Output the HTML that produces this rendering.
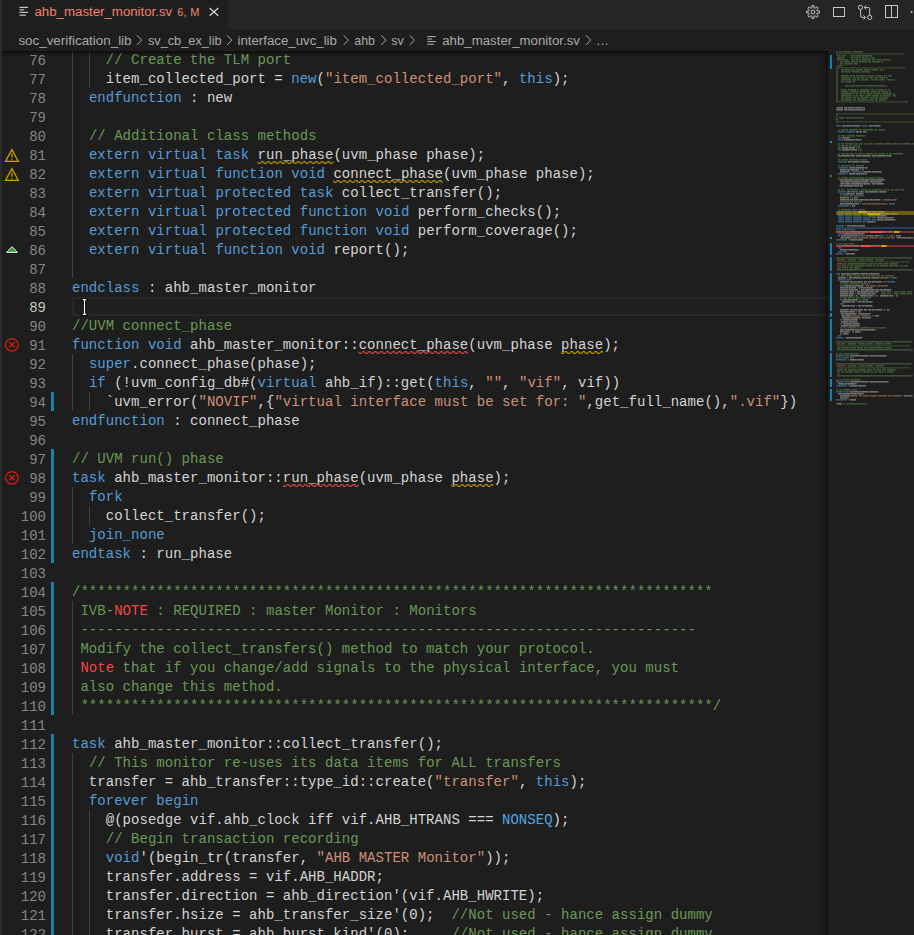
<!DOCTYPE html>
<html><head><meta charset="utf-8">
<style>
*{margin:0;padding:0;box-sizing:border-box}
html,body{width:914px;height:935px;overflow:hidden;background:#1e1e1e}
body{position:relative;font-family:"Liberation Sans",sans-serif}
#tabs{position:absolute;left:0;top:0;width:914px;height:29px;background:#252526}
#tab{position:absolute;left:0;top:0;width:228px;height:29px;background:#1e1e1e}
.tt{position:absolute;white-space:nowrap;font-size:13px;line-height:16px}
#crumbs{position:absolute;left:0;top:29px;width:914px;height:22px;background:#1e1e1e}
.bc{position:absolute;top:4px;white-space:nowrap;font-size:13px;line-height:16px;color:#a9a9a9}
#ed{position:absolute;left:0;top:0;width:914px;height:935px}
.ln{position:absolute;margin-top:1px;left:72px;height:19px;line-height:19px;white-space:pre;font-family:"Liberation Mono",monospace;font-size:14px;color:#d4d4d4;letter-spacing:0.03px}
.num{position:absolute;margin-top:2px;left:0;width:46px;text-align:right;height:19px;line-height:19px;font-family:"Liberation Mono",monospace;font-size:14px;color:#858585}
.num.cur{color:#c6c6c6}
i{font-style:normal}
i.k{color:#569cd6}
i.n{color:#4fa6e8}
i.c{color:#6a9955}
i.s{color:#ce9178}
i.r{color:#f44747}
.gd{position:absolute;width:1px;height:19px;background:#404040}
.gb{position:absolute;left:51px;width:3px;background:#1b81a8}
#leftb{position:absolute;left:0;top:0;width:2px;height:935px;background:#2b2b2b}
#curline{position:absolute;left:72px;top:297px;width:790px;height:19px;border:2px solid #282828}
#shadow{position:absolute;left:0;top:51px;width:828px;height:5px;background:linear-gradient(rgba(0,0,0,0.55),rgba(0,0,0,0))}
#mm{position:absolute;left:828px;top:50px;width:86px;height:885px;background:#1e1e1e}
#mmshadow{position:absolute;left:822px;top:51px;width:6px;height:884px;box-shadow:#000000 -6px 0 6px -6px inset}
</style></head><body>
<div id="ed">
<div id="curline"></div>
<div class="ln" style="top:50px">    <i class="c">// Create the TLM port</i></div>
<div class="num" style="top:50px">76</div>
<div class="gd" style="top:50px;left:72.0px"></div>
<div class="gd" style="top:50px;left:88.9px"></div>
<div class="ln" style="top:69px">    item_collected_port = <i class="k">new</i>(<i class="s">&quot;item_collected_port&quot;</i>, <i class="k">this</i>);</div>
<div class="num" style="top:69px">77</div>
<div class="gd" style="top:69px;left:72.0px"></div>
<div class="gd" style="top:69px;left:88.9px"></div>
<div class="ln" style="top:88px">  <i class="k">endfunction</i> : new</div>
<div class="num" style="top:88px">78</div>
<div class="gd" style="top:88px;left:72.0px"></div>
<div class="ln" style="top:107px"></div>
<div class="num" style="top:107px">79</div>
<div class="gd" style="top:107px;left:72.0px"></div>
<div class="ln" style="top:126px">  <i class="c">// Additional class methods</i></div>
<div class="num" style="top:126px">80</div>
<div class="gd" style="top:126px;left:72.0px"></div>
<div class="ln" style="top:145px">  <i class="k">extern</i> <i class="k">virtual</i> <i class="k">task</i> run_phase(uvm_phase phase);</div>
<div class="num" style="top:145px">81</div>
<div class="gd" style="top:145px;left:72.0px"></div>
<div class="ln" style="top:164px">  <i class="k">extern</i> <i class="k">virtual</i> <i class="k">function</i> <i class="k">void</i> connect_phase(uvm_phase phase);</div>
<div class="num" style="top:164px">82</div>
<div class="gd" style="top:164px;left:72.0px"></div>
<div class="ln" style="top:183px">  <i class="k">extern</i> <i class="k">virtual</i> <i class="k">protected</i> <i class="k">task</i> collect_transfer();</div>
<div class="num" style="top:183px">83</div>
<div class="gd" style="top:183px;left:72.0px"></div>
<div class="ln" style="top:202px">  <i class="k">extern</i> <i class="k">virtual</i> <i class="k">protected</i> <i class="k">function</i> <i class="k">void</i> perform_checks();</div>
<div class="num" style="top:202px">84</div>
<div class="gd" style="top:202px;left:72.0px"></div>
<div class="ln" style="top:221px">  <i class="k">extern</i> <i class="k">virtual</i> <i class="k">protected</i> <i class="k">function</i> <i class="k">void</i> perform_coverage();</div>
<div class="num" style="top:221px">85</div>
<div class="gd" style="top:221px;left:72.0px"></div>
<div class="ln" style="top:240px">  <i class="k">extern</i> <i class="k">virtual</i> <i class="k">function</i> <i class="k">void</i> report();</div>
<div class="num" style="top:240px">86</div>
<div class="gd" style="top:240px;left:72.0px"></div>
<div class="ln" style="top:259px"></div>
<div class="num" style="top:259px">87</div>
<div class="gd" style="top:259px;left:72.0px"></div>
<div class="ln" style="top:278px"><i class="k">endclass</i> : ahb_master_monitor</div>
<div class="num" style="top:278px">88</div>
<div class="ln" style="top:297px"></div>
<div class="num cur" style="top:297px">89</div>
<div class="ln" style="top:316px"><i class="c">//UVM connect_phase</i></div>
<div class="num" style="top:316px">90</div>
<div class="ln" style="top:335px"><i class="k">function</i> <i class="k">void</i> ahb_master_monitor::connect_phase(uvm_phase phase);</div>
<div class="num" style="top:335px">91</div>
<div class="ln" style="top:354px">  <i class="k">super</i>.connect_phase(phase);</div>
<div class="num" style="top:354px">92</div>
<div class="gd" style="top:354px;left:72.0px"></div>
<div class="ln" style="top:373px">  <i class="k">if</i> (!uvm_config_db#(<i class="k">virtual</i> ahb_if)::get(<i class="k">this</i>, <i class="s">&quot;&quot;</i>, <i class="s">&quot;vif&quot;</i>, vif))</div>
<div class="num" style="top:373px">93</div>
<div class="gd" style="top:373px;left:72.0px"></div>
<div class="ln" style="top:392px">    `uvm_error(<i class="s">&quot;NOVIF&quot;</i>,{<i class="s">&quot;virtual interface must be set for: &quot;</i>,get_full_name(),<i class="s">&quot;.vif&quot;</i>})</div>
<div class="num" style="top:392px">94</div>
<div class="gd" style="top:392px;left:72.0px"></div>
<div class="gd" style="top:392px;left:88.9px"></div>
<div class="ln" style="top:411px"><i class="k">endfunction</i> : connect_phase</div>
<div class="num" style="top:411px">95</div>
<div class="ln" style="top:430px"></div>
<div class="num" style="top:430px">96</div>
<div class="ln" style="top:449px"><i class="c">// UVM run() phase</i></div>
<div class="num" style="top:449px">97</div>
<div class="ln" style="top:468px"><i class="k">task</i> ahb_master_monitor::run_phase(uvm_phase phase);</div>
<div class="num" style="top:468px">98</div>
<div class="ln" style="top:487px">  <i class="k">fork</i></div>
<div class="num" style="top:487px">99</div>
<div class="gd" style="top:487px;left:72.0px"></div>
<div class="ln" style="top:506px">    collect_transfer();</div>
<div class="num" style="top:506px">100</div>
<div class="gd" style="top:506px;left:72.0px"></div>
<div class="gd" style="top:506px;left:88.9px"></div>
<div class="ln" style="top:525px">  <i class="k">join_none</i></div>
<div class="num" style="top:525px">101</div>
<div class="gd" style="top:525px;left:72.0px"></div>
<div class="ln" style="top:544px"><i class="k">endtask</i> : run_phase</div>
<div class="num" style="top:544px">102</div>
<div class="ln" style="top:563px"></div>
<div class="num" style="top:563px">103</div>
<div class="ln" style="top:582px"><i class="c">/***************************************************************************</i></div>
<div class="num" style="top:582px">104</div>
<div class="ln" style="top:601px"><i class="c"> IVB-</i><i class="r">NOTE</i><i class="c"> : REQUIRED : master Monitor : Monitors</i></div>
<div class="num" style="top:601px">105</div>
<div class="gd" style="top:601px;left:72.0px"></div>
<div class="ln" style="top:620px"><i class="c"> -------------------------------------------------------------------------</i></div>
<div class="num" style="top:620px">106</div>
<div class="gd" style="top:620px;left:72.0px"></div>
<div class="ln" style="top:639px"><i class="c"> Modify the collect_transfers() method to match your protocol.</i></div>
<div class="num" style="top:639px">107</div>
<div class="gd" style="top:639px;left:72.0px"></div>
<div class="ln" style="top:658px"> <i class="r">Note</i><i class="c"> that if you change/add signals to the physical interface, you must</i></div>
<div class="num" style="top:658px">108</div>
<div class="gd" style="top:658px;left:72.0px"></div>
<div class="ln" style="top:677px"><i class="c"> also change this method.</i></div>
<div class="num" style="top:677px">109</div>
<div class="gd" style="top:677px;left:72.0px"></div>
<div class="ln" style="top:696px"><i class="c"> ***************************************************************************/</i></div>
<div class="num" style="top:696px">110</div>
<div class="gd" style="top:696px;left:72.0px"></div>
<div class="ln" style="top:715px"></div>
<div class="num" style="top:715px">111</div>
<div class="ln" style="top:734px"><i class="k">task</i> ahb_master_monitor::collect_transfer();</div>
<div class="num" style="top:734px">112</div>
<div class="ln" style="top:753px">  <i class="c">// This monitor re-uses its data items for ALL transfers</i></div>
<div class="num" style="top:753px">113</div>
<div class="gd" style="top:753px;left:72.0px"></div>
<div class="ln" style="top:772px">  transfer = ahb_transfer::type_id::create(<i class="s">&quot;transfer&quot;</i>, <i class="k">this</i>);</div>
<div class="num" style="top:772px">114</div>
<div class="gd" style="top:772px;left:72.0px"></div>
<div class="ln" style="top:791px">  <i class="k">forever</i> <i class="k">begin</i></div>
<div class="num" style="top:791px">115</div>
<div class="gd" style="top:791px;left:72.0px"></div>
<div class="ln" style="top:810px">    @(posedge vif.ahb_clock iff vif.AHB_HTRANS === <i class="n">NONSEQ</i>);</div>
<div class="num" style="top:810px">116</div>
<div class="gd" style="top:810px;left:72.0px"></div>
<div class="gd" style="top:810px;left:88.9px"></div>
<div class="ln" style="top:829px">    <i class="c">// Begin transaction recording</i></div>
<div class="num" style="top:829px">117</div>
<div class="gd" style="top:829px;left:72.0px"></div>
<div class="gd" style="top:829px;left:88.9px"></div>
<div class="ln" style="top:848px">    <i class="k">void</i>&#x27;(begin_tr(transfer, <i class="s">&quot;AHB MASTER Monitor&quot;</i>));</div>
<div class="num" style="top:848px">118</div>
<div class="gd" style="top:848px;left:72.0px"></div>
<div class="gd" style="top:848px;left:88.9px"></div>
<div class="ln" style="top:867px">    transfer.address = vif.AHB_HADDR;</div>
<div class="num" style="top:867px">119</div>
<div class="gd" style="top:867px;left:72.0px"></div>
<div class="gd" style="top:867px;left:88.9px"></div>
<div class="ln" style="top:886px">    transfer.direction = ahb_direction&#x27;(vif.AHB_HWRITE);</div>
<div class="num" style="top:886px">120</div>
<div class="gd" style="top:886px;left:72.0px"></div>
<div class="gd" style="top:886px;left:88.9px"></div>
<div class="ln" style="top:905px">    transfer.hsize = ahb_transfer_size&#x27;(0);  <i class="c">//Not used - hance assign dummy</i></div>
<div class="num" style="top:905px">121</div>
<div class="gd" style="top:905px;left:72.0px"></div>
<div class="gd" style="top:905px;left:88.9px"></div>
<div class="ln" style="top:924px">    transfer.burst = ahb_burst_kind&#x27;(0);     <i class="c">//Not used - hance assign dummy</i></div>
<div class="num" style="top:924px">122</div>
<div class="gd" style="top:924px;left:72.0px"></div>
<div class="gd" style="top:924px;left:88.9px"></div>
<div class="gb" style="top:392px;height:19px"></div><div class="gb" style="top:449px;height:114px"></div><div class="gb" style="top:582px;height:133px"></div><div class="gb" style="top:734px;height:209px"></div>
<svg style="position:absolute;left:0;top:0" width="914" height="935">
<defs>
<pattern id="sqw" x="0" y="0" width="6" height="3" patternUnits="userSpaceOnUse"><g fill="#cca700"><polygon points="5.5,0 2.5,3 1.1,3 4.1,0"/><polygon points="4,0 6,2 6,0.6 5.4,0"/><polygon points="0,2 1,3 2.4,3 0,0.6"/></g></pattern>
<pattern id="sqe" x="0" y="0" width="6" height="3" patternUnits="userSpaceOnUse"><g fill="#f14c4c"><polygon points="5.5,0 2.5,3 1.1,3 4.1,0"/><polygon points="4,0 6,2 6,0.6 5.4,0"/><polygon points="0,2 1,3 2.4,3 0,0.6"/></g></pattern>
</defs>
<pattern id="sq0" x="257.5" y="161" width="6" height="3" patternUnits="userSpaceOnUse"><g fill="#cca700"><polygon points="5.5,0 2.5,3 1.1,3 4.1,0"/><polygon points="4,0 6,2 6,0.6 5.4,0"/><polygon points="0,2 1,3 2.4,3 0,0.6"/></g></pattern><rect x="257.5" y="161" width="75.9" height="3" fill="url(#sq0)"/>
<pattern id="sq1" x="333.3" y="180" width="6" height="3" patternUnits="userSpaceOnUse"><g fill="#cca700"><polygon points="5.5,0 2.5,3 1.1,3 4.1,0"/><polygon points="4,0 6,2 6,0.6 5.4,0"/><polygon points="0,2 1,3 2.4,3 0,0.6"/></g></pattern><rect x="333.3" y="180" width="109.6" height="3" fill="url(#sq1)"/>
<pattern id="sq2" x="358.6" y="351" width="6" height="3" patternUnits="userSpaceOnUse"><g fill="#f14c4c"><polygon points="5.5,0 2.5,3 1.1,3 4.1,0"/><polygon points="4,0 6,2 6,0.6 5.4,0"/><polygon points="0,2 1,3 2.4,3 0,0.6"/></g></pattern><rect x="358.6" y="351" width="109.6" height="3" fill="url(#sq2)"/>
<pattern id="sq3" x="560.9" y="351" width="6" height="3" patternUnits="userSpaceOnUse"><g fill="#cca700"><polygon points="5.5,0 2.5,3 1.1,3 4.1,0"/><polygon points="4,0 6,2 6,0.6 5.4,0"/><polygon points="0,2 1,3 2.4,3 0,0.6"/></g></pattern><rect x="560.9" y="351" width="42.1" height="3" fill="url(#sq3)"/>
<pattern id="sq4" x="282.8" y="484" width="6" height="3" patternUnits="userSpaceOnUse"><g fill="#f14c4c"><polygon points="5.5,0 2.5,3 1.1,3 4.1,0"/><polygon points="4,0 6,2 6,0.6 5.4,0"/><polygon points="0,2 1,3 2.4,3 0,0.6"/></g></pattern><rect x="282.8" y="484" width="75.9" height="3" fill="url(#sq4)"/>
<pattern id="sq5" x="451.3" y="484" width="6" height="3" patternUnits="userSpaceOnUse"><g fill="#cca700"><polygon points="5.5,0 2.5,3 1.1,3 4.1,0"/><polygon points="4,0 6,2 6,0.6 5.4,0"/><polygon points="0,2 1,3 2.4,3 0,0.6"/></g></pattern><rect x="451.3" y="484" width="42.1" height="3" fill="url(#sq5)"/>
</svg>
</div>
<svg style="position:absolute;left:0;top:50px" width="30" height="885">
<g fill="none" stroke="#cca700" stroke-width="1.2"><path d="M11.9,99.6 L18.3,111.4 H5.5 Z"/><path d="M11.9,118.6 L18.3,130.4 H5.5 Z"/></g>
<g fill="#cca700"><rect x="11.3" y="103.5" width="1.2" height="4.2"/><rect x="11.3" y="109.1" width="1.2" height="1.1"/><rect x="11.3" y="122.5" width="1.2" height="4.2"/><rect x="11.3" y="128.1" width="1.2" height="1.1"/></g>
<path d="M12,196.4 L17.7,202.4 H6.3 Z" fill="none" stroke="#000" stroke-width="2.6" stroke-linejoin="round"/><path d="M12,196.4 L17.7,202.4 H6.3 Z" fill="#3f9a3f" stroke="#f4f4f4" stroke-width="1" stroke-linejoin="round"/>
<g fill="none" stroke="#ea1a0c" stroke-width="1.25"><circle cx="11.9" cy="294.8" r="6.3"/><path d="M9.3,292.2 l5.2,5.2 M14.5,292.2 l-5.2,5.2"/><circle cx="11.9" cy="427.8" r="6.3"/><path d="M9.3,425.2 l5.2,5.2 M14.5,425.2 l-5.2,5.2"/></g>
</svg>
<svg style="position:absolute;left:0;top:0" width="120" height="330">
<path d="M82.2,299.6 H86.8 M84.5,299.6 V314.4 M82.2,314.4 H86.8" fill="none" stroke="#000" stroke-width="3.2" stroke-linecap="round"/>
<path d="M82.6,299.6 H86.4 M84.5,299.6 V314.4 M82.6,314.4 H86.4" fill="none" stroke="#fff" stroke-width="1.2"/>
</svg>
<div id="shadow"></div>
<div id="mm"></div><svg style="position:absolute;left:0;top:0" width="914" height="935"><rect x="836" y="227" width="78" height="2" fill="#264f78" fill-opacity="0.7"/>
<rect x="830" y="55" width="2" height="14" fill="#1b81a8"/>
<rect x="830" y="141" width="2" height="2" fill="#1b81a8"/>
<rect x="830" y="175" width="2" height="2" fill="#1b81a8"/>
<rect x="830" y="237" width="2" height="2" fill="#1b81a8"/>
<rect x="830" y="243" width="2" height="12" fill="#1b81a8"/>
<rect x="830" y="257" width="2" height="14" fill="#1b81a8"/>
<rect x="830" y="273" width="2" height="38" fill="#1b81a8"/>
<rect x="830" y="313" width="2" height="4" fill="#1b81a8"/>
<rect x="830" y="319" width="2" height="32" fill="#1b81a8"/>
<rect x="830" y="353" width="2" height="24" fill="#1b81a8"/>
<rect x="830" y="379" width="2" height="8" fill="#1b81a8"/>
<rect x="830" y="389" width="2" height="12" fill="#1b81a8"/>
<rect x="836" y="51" width="2" height="1.6" fill="#6a9955" fill-opacity="0.40"/>
<rect x="839" y="51" width="3" height="1.6" fill="#6a9955" fill-opacity="0.44"/>
<rect x="843" y="51" width="8" height="1.6" fill="#6a9955" fill-opacity="0.44"/>
<rect x="851" y="51" width="1" height="1.6" fill="#6a9955" fill-opacity="0.25"/>
<rect x="853" y="51" width="10" height="1.6" fill="#6a9955" fill-opacity="0.44"/>
<rect x="836" y="53" width="2" height="1.6" fill="#6a9955" fill-opacity="0.40"/>
<rect x="838" y="53" width="66" height="1.6" fill="#6a9955" fill-opacity="0.26"/>
<rect x="837" y="55" width="4" height="1.6" fill="#6a9955" fill-opacity="0.44"/>
<rect x="842" y="55" width="4" height="1.6" fill="#6a9955" fill-opacity="0.44"/>
<rect x="849" y="55" width="1" height="1.6" fill="#6a9955" fill-opacity="0.25"/>
<rect x="851" y="55" width="3" height="1.6" fill="#6a9955" fill-opacity="0.44"/>
<rect x="854" y="55" width="1" height="1.6" fill="#6a9955" fill-opacity="0.26"/>
<rect x="855" y="55" width="6" height="1.6" fill="#6a9955" fill-opacity="0.44"/>
<rect x="861" y="55" width="1" height="1.6" fill="#6a9955" fill-opacity="0.26"/>
<rect x="862" y="55" width="7" height="1.6" fill="#6a9955" fill-opacity="0.44"/>
<rect x="869" y="55" width="1" height="1.6" fill="#6a9955" fill-opacity="0.25"/>
<rect x="870" y="55" width="2" height="1.6" fill="#6a9955" fill-opacity="0.44"/>
<rect x="837" y="57" width="7" height="1.6" fill="#6a9955" fill-opacity="0.44"/>
<rect x="849" y="57" width="1" height="1.6" fill="#6a9955" fill-opacity="0.25"/>
<rect x="851" y="57" width="3" height="1.6" fill="#6a9955" fill-opacity="0.44"/>
<rect x="855" y="57" width="3" height="1.6" fill="#6a9955" fill-opacity="0.44"/>
<rect x="859" y="57" width="2" height="1.6" fill="#6a9955" fill-opacity="0.44"/>
<rect x="862" y="57" width="2" height="1.6" fill="#6a9955" fill-opacity="0.44"/>
<rect x="864" y="57" width="1" height="1.6" fill="#6a9955" fill-opacity="0.25"/>
<rect x="865" y="57" width="2" height="1.6" fill="#6a9955" fill-opacity="0.44"/>
<rect x="867" y="57" width="1" height="1.6" fill="#6a9955" fill-opacity="0.25"/>
<rect x="868" y="57" width="2" height="1.6" fill="#6a9955" fill-opacity="0.44"/>
<rect x="871" y="57" width="4" height="1.6" fill="#6a9955" fill-opacity="0.44"/>
<rect x="837" y="59" width="11" height="1.6" fill="#6a9955" fill-opacity="0.44"/>
<rect x="849" y="59" width="1" height="1.6" fill="#6a9955" fill-opacity="0.25"/>
<rect x="851" y="59" width="4" height="1.6" fill="#6a9955" fill-opacity="0.44"/>
<rect x="856" y="59" width="4" height="1.6" fill="#6a9955" fill-opacity="0.44"/>
<rect x="861" y="59" width="10" height="1.6" fill="#6a9955" fill-opacity="0.44"/>
<rect x="872" y="59" width="3" height="1.6" fill="#6a9955" fill-opacity="0.44"/>
<rect x="876" y="59" width="6" height="1.6" fill="#6a9955" fill-opacity="0.44"/>
<rect x="883" y="59" width="7" height="1.6" fill="#6a9955" fill-opacity="0.44"/>
<rect x="890" y="59" width="1" height="1.6" fill="#6a9955" fill-opacity="0.25"/>
<rect x="838" y="61" width="1" height="1.6" fill="#6a9955" fill-opacity="0.25"/>
<rect x="840" y="61" width="3" height="1.6" fill="#6a9955" fill-opacity="0.44"/>
<rect x="844" y="61" width="6" height="1.6" fill="#6a9955" fill-opacity="0.44"/>
<rect x="851" y="61" width="7" height="1.6" fill="#6a9955" fill-opacity="0.44"/>
<rect x="859" y="61" width="8" height="1.6" fill="#6a9955" fill-opacity="0.44"/>
<rect x="868" y="61" width="3" height="1.6" fill="#6a9955" fill-opacity="0.44"/>
<rect x="872" y="61" width="8" height="1.6" fill="#6a9955" fill-opacity="0.44"/>
<rect x="881" y="61" width="2" height="1.6" fill="#6a9955" fill-opacity="0.44"/>
<rect x="838" y="63" width="1" height="1.6" fill="#6a9955" fill-opacity="0.25"/>
<rect x="840" y="63" width="3" height="1.6" fill="#6a9955" fill-opacity="0.44"/>
<rect x="844" y="63" width="9" height="1.6" fill="#6a9955" fill-opacity="0.44"/>
<rect x="854" y="63" width="3" height="1.6" fill="#6a9955" fill-opacity="0.44"/>
<rect x="857" y="63" width="1" height="1.6" fill="#6a9955" fill-opacity="0.25"/>
<rect x="837" y="65" width="5" height="1.6" fill="#6a9955" fill-opacity="0.44"/>
<rect x="843" y="65" width="1" height="1.6" fill="#6a9955" fill-opacity="0.25"/>
<rect x="836" y="67" width="67" height="1.6" fill="#6a9955" fill-opacity="0.26"/>
<rect x="903" y="67" width="2" height="1.6" fill="#6a9955" fill-opacity="0.40"/>
<rect x="836" y="69" width="2" height="1.6" fill="#6a9955" fill-opacity="0.40"/>
<rect x="841" y="69" width="9" height="1.6" fill="#6a9955" fill-opacity="0.44"/>
<rect x="851" y="69" width="4" height="1.6" fill="#6a9955" fill-opacity="0.44"/>
<rect x="856" y="69" width="7" height="1.6" fill="#6a9955" fill-opacity="0.44"/>
<rect x="864" y="69" width="6" height="1.6" fill="#6a9955" fill-opacity="0.44"/>
<rect x="871" y="69" width="7" height="1.6" fill="#6a9955" fill-opacity="0.44"/>
<rect x="878" y="69" width="1" height="1.6" fill="#6a9955" fill-opacity="0.25"/>
<rect x="880" y="69" width="3" height="1.6" fill="#6a9955" fill-opacity="0.44"/>
<rect x="883" y="69" width="1" height="1.6" fill="#6a9955" fill-opacity="0.25"/>
<rect x="836" y="71" width="2" height="1.6" fill="#6a9955" fill-opacity="0.40"/>
<rect x="841" y="71" width="3" height="1.6" fill="#6a9955" fill-opacity="0.44"/>
<rect x="845" y="71" width="6" height="1.6" fill="#6a9955" fill-opacity="0.44"/>
<rect x="852" y="71" width="8" height="1.6" fill="#6a9955" fill-opacity="0.44"/>
<rect x="861" y="71" width="9" height="1.6" fill="#6a9955" fill-opacity="0.44"/>
<rect x="836" y="73" width="2" height="1.6" fill="#6a9955" fill-opacity="0.40"/>
<rect x="836" y="75" width="2" height="1.6" fill="#6a9955" fill-opacity="0.40"/>
<rect x="841" y="75" width="8" height="1.6" fill="#6a9955" fill-opacity="0.44"/>
<rect x="850" y="75" width="5" height="1.6" fill="#6a9955" fill-opacity="0.44"/>
<rect x="856" y="75" width="3" height="1.6" fill="#6a9955" fill-opacity="0.44"/>
<rect x="860" y="75" width="6" height="1.6" fill="#6a9955" fill-opacity="0.44"/>
<rect x="867" y="75" width="7" height="1.6" fill="#6a9955" fill-opacity="0.44"/>
<rect x="874" y="75" width="1" height="1.6" fill="#6a9955" fill-opacity="0.25"/>
<rect x="876" y="75" width="7" height="1.6" fill="#6a9955" fill-opacity="0.44"/>
<rect x="884" y="75" width="1" height="1.6" fill="#6a9955" fill-opacity="0.44"/>
<rect x="885" y="75" width="1" height="1.6" fill="#6a9955" fill-opacity="0.25"/>
<rect x="886" y="75" width="1" height="1.6" fill="#6a9955" fill-opacity="0.44"/>
<rect x="888" y="75" width="1" height="1.6" fill="#6a9955" fill-opacity="0.40"/>
<rect x="889" y="75" width="3" height="1.6" fill="#6a9955" fill-opacity="0.44"/>
<rect x="836" y="77" width="2" height="1.6" fill="#6a9955" fill-opacity="0.40"/>
<rect x="841" y="77" width="1" height="1.6" fill="#6a9955" fill-opacity="0.25"/>
<rect x="842" y="77" width="7" height="1.6" fill="#6a9955" fill-opacity="0.44"/>
<rect x="849" y="77" width="1" height="1.6" fill="#6a9955" fill-opacity="0.25"/>
<rect x="850" y="77" width="1" height="1.6" fill="#6a9955" fill-opacity="0.40"/>
<rect x="851" y="77" width="1" height="1.6" fill="#6a9955" fill-opacity="0.25"/>
<rect x="853" y="77" width="3" height="1.6" fill="#6a9955" fill-opacity="0.44"/>
<rect x="857" y="77" width="3" height="1.6" fill="#6a9955" fill-opacity="0.44"/>
<rect x="861" y="77" width="3" height="1.6" fill="#6a9955" fill-opacity="0.44"/>
<rect x="865" y="77" width="3" height="1.6" fill="#6a9955" fill-opacity="0.44"/>
<rect x="869" y="77" width="4" height="1.6" fill="#6a9955" fill-opacity="0.44"/>
<rect x="874" y="77" width="4" height="1.6" fill="#6a9955" fill-opacity="0.44"/>
<rect x="879" y="77" width="6" height="1.6" fill="#6a9955" fill-opacity="0.44"/>
<rect x="886" y="77" width="2" height="1.6" fill="#6a9955" fill-opacity="0.44"/>
<rect x="836" y="79" width="2" height="1.6" fill="#6a9955" fill-opacity="0.40"/>
<rect x="841" y="79" width="10" height="1.6" fill="#6a9955" fill-opacity="0.44"/>
<rect x="852" y="79" width="4" height="1.6" fill="#6a9955" fill-opacity="0.44"/>
<rect x="857" y="79" width="3" height="1.6" fill="#6a9955" fill-opacity="0.44"/>
<rect x="861" y="79" width="7" height="1.6" fill="#6a9955" fill-opacity="0.44"/>
<rect x="868" y="79" width="1" height="1.6" fill="#6a9955" fill-opacity="0.25"/>
<rect x="871" y="79" width="3" height="1.6" fill="#6a9955" fill-opacity="0.44"/>
<rect x="875" y="79" width="3" height="1.6" fill="#6a9955" fill-opacity="0.44"/>
<rect x="879" y="79" width="6" height="1.6" fill="#6a9955" fill-opacity="0.44"/>
<rect x="886" y="79" width="1" height="1.6" fill="#6a9955" fill-opacity="0.44"/>
<rect x="888" y="79" width="4" height="1.6" fill="#6a9955" fill-opacity="0.44"/>
<rect x="893" y="79" width="2" height="1.6" fill="#6a9955" fill-opacity="0.44"/>
<rect x="836" y="81" width="2" height="1.6" fill="#6a9955" fill-opacity="0.40"/>
<rect x="841" y="81" width="3" height="1.6" fill="#6a9955" fill-opacity="0.44"/>
<rect x="845" y="81" width="7" height="1.6" fill="#6a9955" fill-opacity="0.44"/>
<rect x="853" y="81" width="2" height="1.6" fill="#6a9955" fill-opacity="0.44"/>
<rect x="836" y="83" width="2" height="1.6" fill="#6a9955" fill-opacity="0.40"/>
<rect x="836" y="85" width="2" height="1.6" fill="#6a9955" fill-opacity="0.40"/>
<rect x="845" y="85" width="4" height="1.6" fill="#6a9955" fill-opacity="0.44"/>
<rect x="849" y="85" width="1" height="1.6" fill="#6a9955" fill-opacity="0.25"/>
<rect x="850" y="85" width="2" height="1.6" fill="#6a9955" fill-opacity="0.40"/>
<rect x="852" y="85" width="3" height="1.6" fill="#6a9955" fill-opacity="0.44"/>
<rect x="855" y="85" width="1" height="1.6" fill="#6a9955" fill-opacity="0.25"/>
<rect x="856" y="85" width="6" height="1.6" fill="#6a9955" fill-opacity="0.44"/>
<rect x="862" y="85" width="1" height="1.6" fill="#6a9955" fill-opacity="0.25"/>
<rect x="863" y="85" width="3" height="1.6" fill="#6a9955" fill-opacity="0.44"/>
<rect x="866" y="85" width="1" height="1.6" fill="#6a9955" fill-opacity="0.40"/>
<rect x="867" y="85" width="8" height="1.6" fill="#6a9955" fill-opacity="0.44"/>
<rect x="875" y="85" width="1" height="1.6" fill="#6a9955" fill-opacity="0.40"/>
<rect x="876" y="85" width="7" height="1.6" fill="#6a9955" fill-opacity="0.44"/>
<rect x="883" y="85" width="1" height="1.6" fill="#6a9955" fill-opacity="0.26"/>
<rect x="884" y="85" width="1" height="1.6" fill="#6a9955" fill-opacity="0.44"/>
<rect x="885" y="85" width="1" height="1.6" fill="#6a9955" fill-opacity="0.25"/>
<rect x="886" y="85" width="1" height="1.6" fill="#6a9955" fill-opacity="0.44"/>
<rect x="836" y="87" width="2" height="1.6" fill="#6a9955" fill-opacity="0.40"/>
<rect x="836" y="89" width="2" height="1.6" fill="#6a9955" fill-opacity="0.40"/>
<rect x="841" y="89" width="6" height="1.6" fill="#6a9955" fill-opacity="0.44"/>
<rect x="848" y="89" width="8" height="1.6" fill="#6a9955" fill-opacity="0.44"/>
<rect x="857" y="89" width="2" height="1.6" fill="#6a9955" fill-opacity="0.44"/>
<rect x="860" y="89" width="10" height="1.6" fill="#6a9955" fill-opacity="0.44"/>
<rect x="871" y="89" width="3" height="1.6" fill="#6a9955" fill-opacity="0.44"/>
<rect x="875" y="89" width="2" height="1.6" fill="#6a9955" fill-opacity="0.44"/>
<rect x="878" y="89" width="6" height="1.6" fill="#6a9955" fill-opacity="0.44"/>
<rect x="885" y="89" width="2" height="1.6" fill="#6a9955" fill-opacity="0.44"/>
<rect x="888" y="89" width="2" height="1.6" fill="#6a9955" fill-opacity="0.44"/>
<rect x="836" y="91" width="2" height="1.6" fill="#6a9955" fill-opacity="0.40"/>
<rect x="841" y="91" width="7" height="1.6" fill="#6a9955" fill-opacity="0.44"/>
<rect x="848" y="91" width="1" height="1.6" fill="#6a9955" fill-opacity="0.25"/>
<rect x="850" y="91" width="8" height="1.6" fill="#6a9955" fill-opacity="0.44"/>
<rect x="859" y="91" width="11" height="1.6" fill="#6a9955" fill-opacity="0.44"/>
<rect x="871" y="91" width="5" height="1.6" fill="#6a9955" fill-opacity="0.44"/>
<rect x="877" y="91" width="3" height="1.6" fill="#6a9955" fill-opacity="0.44"/>
<rect x="881" y="91" width="7" height="1.6" fill="#6a9955" fill-opacity="0.44"/>
<rect x="889" y="91" width="2" height="1.6" fill="#6a9955" fill-opacity="0.44"/>
<rect x="836" y="93" width="2" height="1.6" fill="#6a9955" fill-opacity="0.40"/>
<rect x="841" y="93" width="11" height="1.6" fill="#6a9955" fill-opacity="0.44"/>
<rect x="853" y="93" width="2" height="1.6" fill="#6a9955" fill-opacity="0.44"/>
<rect x="856" y="93" width="2" height="1.6" fill="#6a9955" fill-opacity="0.44"/>
<rect x="859" y="93" width="1" height="1.6" fill="#6a9955" fill-opacity="0.25"/>
<rect x="860" y="93" width="2" height="1.6" fill="#6a9955" fill-opacity="0.44"/>
<rect x="863" y="93" width="2" height="1.6" fill="#6a9955" fill-opacity="0.44"/>
<rect x="865" y="93" width="1" height="1.6" fill="#6a9955" fill-opacity="0.25"/>
<rect x="867" y="93" width="5" height="1.6" fill="#6a9955" fill-opacity="0.44"/>
<rect x="872" y="93" width="1" height="1.6" fill="#6a9955" fill-opacity="0.25"/>
<rect x="874" y="93" width="7" height="1.6" fill="#6a9955" fill-opacity="0.44"/>
<rect x="882" y="93" width="10" height="1.6" fill="#6a9955" fill-opacity="0.44"/>
<rect x="893" y="93" width="2" height="1.6" fill="#6a9955" fill-opacity="0.44"/>
<rect x="836" y="95" width="2" height="1.6" fill="#6a9955" fill-opacity="0.40"/>
<rect x="841" y="95" width="10" height="1.6" fill="#6a9955" fill-opacity="0.44"/>
<rect x="852" y="95" width="2" height="1.6" fill="#6a9955" fill-opacity="0.44"/>
<rect x="855" y="95" width="3" height="1.6" fill="#6a9955" fill-opacity="0.44"/>
<rect x="859" y="95" width="4" height="1.6" fill="#6a9955" fill-opacity="0.44"/>
<rect x="863" y="95" width="1" height="1.6" fill="#6a9955" fill-opacity="0.25"/>
<rect x="865" y="95" width="6" height="1.6" fill="#6a9955" fill-opacity="0.44"/>
<rect x="872" y="95" width="7" height="1.6" fill="#6a9955" fill-opacity="0.44"/>
<rect x="880" y="95" width="2" height="1.6" fill="#6a9955" fill-opacity="0.44"/>
<rect x="883" y="95" width="7" height="1.6" fill="#6a9955" fill-opacity="0.44"/>
<rect x="890" y="95" width="1" height="1.6" fill="#6a9955" fill-opacity="0.25"/>
<rect x="893" y="95" width="3" height="1.6" fill="#6a9955" fill-opacity="0.44"/>
<rect x="836" y="97" width="2" height="1.6" fill="#6a9955" fill-opacity="0.40"/>
<rect x="841" y="97" width="3" height="1.6" fill="#6a9955" fill-opacity="0.44"/>
<rect x="845" y="97" width="7" height="1.6" fill="#6a9955" fill-opacity="0.44"/>
<rect x="853" y="97" width="3" height="1.6" fill="#6a9955" fill-opacity="0.44"/>
<rect x="857" y="97" width="3" height="1.6" fill="#6a9955" fill-opacity="0.44"/>
<rect x="861" y="97" width="8" height="1.6" fill="#6a9955" fill-opacity="0.44"/>
<rect x="870" y="97" width="8" height="1.6" fill="#6a9955" fill-opacity="0.44"/>
<rect x="879" y="97" width="9" height="1.6" fill="#6a9955" fill-opacity="0.44"/>
<rect x="836" y="99" width="2" height="1.6" fill="#6a9955" fill-opacity="0.40"/>
<rect x="841" y="99" width="11" height="1.6" fill="#6a9955" fill-opacity="0.44"/>
<rect x="853" y="99" width="3" height="1.6" fill="#6a9955" fill-opacity="0.44"/>
<rect x="857" y="99" width="11" height="1.6" fill="#6a9955" fill-opacity="0.44"/>
<rect x="869" y="99" width="5" height="1.6" fill="#6a9955" fill-opacity="0.44"/>
<rect x="875" y="99" width="3" height="1.6" fill="#6a9955" fill-opacity="0.44"/>
<rect x="879" y="99" width="7" height="1.6" fill="#6a9955" fill-opacity="0.44"/>
<rect x="886" y="99" width="1" height="1.6" fill="#6a9955" fill-opacity="0.25"/>
<rect x="836" y="101" width="2" height="1.6" fill="#6a9955" fill-opacity="0.40"/>
<rect x="838" y="101" width="68" height="1.6" fill="#6a9955" fill-opacity="0.26"/>
<rect x="906" y="101" width="2" height="1.6" fill="#6a9955" fill-opacity="0.40"/>
<rect x="836" y="107" width="1" height="1.6" fill="#d4d4d4" fill-opacity="0.25"/>
<rect x="837" y="107" width="6" height="1.6" fill="#d4d4d4" fill-opacity="0.44"/>
<rect x="844" y="107" width="3" height="1.6" fill="#d4d4d4" fill-opacity="0.44"/>
<rect x="847" y="107" width="1" height="1.6" fill="#d4d4d4" fill-opacity="0.26"/>
<rect x="848" y="107" width="6" height="1.6" fill="#d4d4d4" fill-opacity="0.44"/>
<rect x="854" y="107" width="1" height="1.6" fill="#d4d4d4" fill-opacity="0.26"/>
<rect x="855" y="107" width="7" height="1.6" fill="#d4d4d4" fill-opacity="0.44"/>
<rect x="862" y="107" width="1" height="1.6" fill="#d4d4d4" fill-opacity="0.26"/>
<rect x="863" y="107" width="2" height="1.6" fill="#d4d4d4" fill-opacity="0.44"/>
<rect x="836" y="109" width="1" height="1.6" fill="#d4d4d4" fill-opacity="0.25"/>
<rect x="837" y="109" width="6" height="1.6" fill="#d4d4d4" fill-opacity="0.44"/>
<rect x="844" y="109" width="3" height="1.6" fill="#d4d4d4" fill-opacity="0.44"/>
<rect x="847" y="109" width="1" height="1.6" fill="#d4d4d4" fill-opacity="0.26"/>
<rect x="848" y="109" width="6" height="1.6" fill="#d4d4d4" fill-opacity="0.44"/>
<rect x="854" y="109" width="1" height="1.6" fill="#d4d4d4" fill-opacity="0.26"/>
<rect x="855" y="109" width="7" height="1.6" fill="#d4d4d4" fill-opacity="0.44"/>
<rect x="862" y="109" width="1" height="1.6" fill="#d4d4d4" fill-opacity="0.26"/>
<rect x="863" y="109" width="2" height="1.6" fill="#d4d4d4" fill-opacity="0.44"/>
<rect x="836" y="113" width="2" height="1.6" fill="#6a9955" fill-opacity="0.40"/>
<rect x="838" y="113" width="76" height="1.6" fill="#6a9955" fill-opacity="0.26"/>
<rect x="836" y="115" width="2" height="1.6" fill="#6a9955" fill-opacity="0.40"/>
<rect x="836" y="117" width="2" height="1.6" fill="#6a9955" fill-opacity="0.40"/>
<rect x="839" y="117" width="5" height="1.6" fill="#6a9955" fill-opacity="0.44"/>
<rect x="844" y="117" width="1" height="1.6" fill="#6a9955" fill-opacity="0.25"/>
<rect x="846" y="117" width="3" height="1.6" fill="#6a9955" fill-opacity="0.44"/>
<rect x="849" y="117" width="1" height="1.6" fill="#6a9955" fill-opacity="0.26"/>
<rect x="850" y="117" width="6" height="1.6" fill="#6a9955" fill-opacity="0.44"/>
<rect x="856" y="117" width="1" height="1.6" fill="#6a9955" fill-opacity="0.26"/>
<rect x="857" y="117" width="7" height="1.6" fill="#6a9955" fill-opacity="0.44"/>
<rect x="836" y="119" width="2" height="1.6" fill="#6a9955" fill-opacity="0.40"/>
<rect x="836" y="121" width="2" height="1.6" fill="#6a9955" fill-opacity="0.40"/>
<rect x="838" y="121" width="76" height="1.6" fill="#6a9955" fill-opacity="0.26"/>
<rect x="836" y="125" width="5" height="1.6" fill="#569cd6" fill-opacity="0.44"/>
<rect x="842" y="125" width="3" height="1.6" fill="#d4d4d4" fill-opacity="0.44"/>
<rect x="845" y="125" width="1" height="1.6" fill="#d4d4d4" fill-opacity="0.26"/>
<rect x="846" y="125" width="6" height="1.6" fill="#d4d4d4" fill-opacity="0.44"/>
<rect x="852" y="125" width="1" height="1.6" fill="#d4d4d4" fill-opacity="0.26"/>
<rect x="853" y="125" width="7" height="1.6" fill="#d4d4d4" fill-opacity="0.44"/>
<rect x="861" y="125" width="7" height="1.6" fill="#569cd6" fill-opacity="0.44"/>
<rect x="869" y="125" width="3" height="1.6" fill="#d4d4d4" fill-opacity="0.44"/>
<rect x="872" y="125" width="1" height="1.6" fill="#d4d4d4" fill-opacity="0.26"/>
<rect x="873" y="125" width="7" height="1.6" fill="#d4d4d4" fill-opacity="0.44"/>
<rect x="880" y="125" width="1" height="1.6" fill="#d4d4d4" fill-opacity="0.25"/>
<rect x="838" y="129" width="2" height="1.6" fill="#6a9955" fill-opacity="0.40"/>
<rect x="841" y="129" width="7" height="1.6" fill="#6a9955" fill-opacity="0.44"/>
<rect x="849" y="129" width="9" height="1.6" fill="#6a9955" fill-opacity="0.44"/>
<rect x="859" y="129" width="3" height="1.6" fill="#6a9955" fill-opacity="0.44"/>
<rect x="863" y="129" width="10" height="1.6" fill="#6a9955" fill-opacity="0.44"/>
<rect x="874" y="129" width="3" height="1.6" fill="#6a9955" fill-opacity="0.44"/>
<rect x="878" y="129" width="7" height="1.6" fill="#6a9955" fill-opacity="0.44"/>
<rect x="838" y="131" width="7" height="1.6" fill="#569cd6" fill-opacity="0.44"/>
<rect x="846" y="131" width="9" height="1.6" fill="#569cd6" fill-opacity="0.44"/>
<rect x="856" y="131" width="3" height="1.6" fill="#d4d4d4" fill-opacity="0.44"/>
<rect x="859" y="131" width="1" height="1.6" fill="#d4d4d4" fill-opacity="0.26"/>
<rect x="860" y="131" width="2" height="1.6" fill="#d4d4d4" fill-opacity="0.44"/>
<rect x="863" y="131" width="3" height="1.6" fill="#d4d4d4" fill-opacity="0.44"/>
<rect x="866" y="131" width="1" height="1.6" fill="#d4d4d4" fill-opacity="0.25"/>
<rect x="838" y="135" width="2" height="1.6" fill="#6a9955" fill-opacity="0.40"/>
<rect x="841" y="135" width="5" height="1.6" fill="#6a9955" fill-opacity="0.44"/>
<rect x="847" y="135" width="8" height="1.6" fill="#6a9955" fill-opacity="0.44"/>
<rect x="856" y="135" width="9" height="1.6" fill="#6a9955" fill-opacity="0.44"/>
<rect x="838" y="137" width="3" height="1.6" fill="#569cd6" fill-opacity="0.44"/>
<rect x="842" y="137" width="3" height="1.6" fill="#d4d4d4" fill-opacity="0.44"/>
<rect x="845" y="137" width="1" height="1.6" fill="#d4d4d4" fill-opacity="0.26"/>
<rect x="846" y="137" width="3" height="1.6" fill="#d4d4d4" fill-opacity="0.44"/>
<rect x="849" y="137" width="1" height="1.6" fill="#d4d4d4" fill-opacity="0.25"/>
<rect x="838" y="139" width="5" height="1.6" fill="#569cd6" fill-opacity="0.44"/>
<rect x="844" y="139" width="11" height="1.6" fill="#d4d4d4" fill-opacity="0.44"/>
<rect x="855" y="139" width="1" height="1.6" fill="#d4d4d4" fill-opacity="0.26"/>
<rect x="856" y="139" width="5" height="1.6" fill="#d4d4d4" fill-opacity="0.44"/>
<rect x="861" y="139" width="1" height="1.6" fill="#d4d4d4" fill-opacity="0.25"/>
<rect x="838" y="143" width="2" height="1.6" fill="#6a9955" fill-opacity="0.40"/>
<rect x="841" y="143" width="3" height="1.6" fill="#6a9955" fill-opacity="0.44"/>
<rect x="845" y="143" width="9" height="1.6" fill="#6a9955" fill-opacity="0.44"/>
<rect x="855" y="143" width="3" height="1.6" fill="#6a9955" fill-opacity="0.44"/>
<rect x="859" y="143" width="4" height="1.6" fill="#6a9955" fill-opacity="0.44"/>
<rect x="864" y="143" width="3" height="1.6" fill="#6a9955" fill-opacity="0.44"/>
<rect x="868" y="143" width="4" height="1.6" fill="#6a9955" fill-opacity="0.44"/>
<rect x="873" y="143" width="2" height="1.6" fill="#6a9955" fill-opacity="0.44"/>
<rect x="876" y="143" width="7" height="1.6" fill="#6a9955" fill-opacity="0.44"/>
<rect x="884" y="143" width="7" height="1.6" fill="#6a9955" fill-opacity="0.44"/>
<rect x="892" y="143" width="6" height="1.6" fill="#6a9955" fill-opacity="0.44"/>
<rect x="899" y="143" width="3" height="1.6" fill="#6a9955" fill-opacity="0.44"/>
<rect x="903" y="143" width="8" height="1.6" fill="#6a9955" fill-opacity="0.44"/>
<rect x="912" y="143" width="2" height="1.6" fill="#6a9955" fill-opacity="0.44"/>
<rect x="838" y="145" width="2" height="1.6" fill="#6a9955" fill-opacity="0.40"/>
<rect x="841" y="145" width="4" height="1.6" fill="#6a9955" fill-opacity="0.44"/>
<rect x="846" y="145" width="2" height="1.6" fill="#6a9955" fill-opacity="0.44"/>
<rect x="849" y="145" width="3" height="1.6" fill="#6a9955" fill-opacity="0.44"/>
<rect x="853" y="145" width="7" height="1.6" fill="#6a9955" fill-opacity="0.44"/>
<rect x="838" y="147" width="3" height="1.6" fill="#569cd6" fill-opacity="0.44"/>
<rect x="842" y="147" width="6" height="1.6" fill="#d4d4d4" fill-opacity="0.44"/>
<rect x="848" y="147" width="1" height="1.6" fill="#d4d4d4" fill-opacity="0.26"/>
<rect x="849" y="147" width="6" height="1.6" fill="#d4d4d4" fill-opacity="0.44"/>
<rect x="856" y="147" width="1" height="1.6" fill="#d4d4d4" fill-opacity="0.26"/>
<rect x="858" y="147" width="1" height="1.6" fill="#d4d4d4" fill-opacity="0.44"/>
<rect x="859" y="147" width="1" height="1.6" fill="#d4d4d4" fill-opacity="0.25"/>
<rect x="838" y="149" width="3" height="1.6" fill="#569cd6" fill-opacity="0.44"/>
<rect x="842" y="149" width="8" height="1.6" fill="#d4d4d4" fill-opacity="0.44"/>
<rect x="850" y="149" width="1" height="1.6" fill="#d4d4d4" fill-opacity="0.26"/>
<rect x="851" y="149" width="6" height="1.6" fill="#d4d4d4" fill-opacity="0.44"/>
<rect x="858" y="149" width="1" height="1.6" fill="#d4d4d4" fill-opacity="0.26"/>
<rect x="860" y="149" width="1" height="1.6" fill="#d4d4d4" fill-opacity="0.44"/>
<rect x="861" y="149" width="1" height="1.6" fill="#d4d4d4" fill-opacity="0.25"/>
<rect x="838" y="153" width="2" height="1.6" fill="#6a9955" fill-opacity="0.40"/>
<rect x="841" y="153" width="4" height="1.6" fill="#6a9955" fill-opacity="0.44"/>
<rect x="846" y="153" width="3" height="1.6" fill="#6a9955" fill-opacity="0.44"/>
<rect x="850" y="153" width="4" height="1.6" fill="#6a9955" fill-opacity="0.44"/>
<rect x="855" y="153" width="2" height="1.6" fill="#6a9955" fill-opacity="0.44"/>
<rect x="858" y="153" width="4" height="1.6" fill="#6a9955" fill-opacity="0.44"/>
<rect x="863" y="153" width="2" height="1.6" fill="#6a9955" fill-opacity="0.44"/>
<rect x="866" y="153" width="7" height="1.6" fill="#6a9955" fill-opacity="0.44"/>
<rect x="874" y="153" width="3" height="1.6" fill="#6a9955" fill-opacity="0.44"/>
<rect x="878" y="153" width="7" height="1.6" fill="#6a9955" fill-opacity="0.44"/>
<rect x="886" y="153" width="2" height="1.6" fill="#6a9955" fill-opacity="0.44"/>
<rect x="889" y="153" width="3" height="1.6" fill="#6a9955" fill-opacity="0.44"/>
<rect x="893" y="153" width="10" height="1.6" fill="#6a9955" fill-opacity="0.44"/>
<rect x="838" y="155" width="3" height="1.6" fill="#d4d4d4" fill-opacity="0.44"/>
<rect x="841" y="155" width="1" height="1.6" fill="#d4d4d4" fill-opacity="0.26"/>
<rect x="842" y="155" width="8" height="1.6" fill="#d4d4d4" fill-opacity="0.44"/>
<rect x="850" y="155" width="1" height="1.6" fill="#d4d4d4" fill-opacity="0.26"/>
<rect x="851" y="155" width="4" height="1.6" fill="#d4d4d4" fill-opacity="0.44"/>
<rect x="856" y="155" width="2" height="1.6" fill="#d4d4d4" fill-opacity="0.40"/>
<rect x="858" y="155" width="3" height="1.6" fill="#d4d4d4" fill-opacity="0.44"/>
<rect x="861" y="155" width="1" height="1.6" fill="#d4d4d4" fill-opacity="0.26"/>
<rect x="862" y="155" width="8" height="1.6" fill="#d4d4d4" fill-opacity="0.44"/>
<rect x="870" y="155" width="1" height="1.6" fill="#d4d4d4" fill-opacity="0.40"/>
<rect x="872" y="155" width="4" height="1.6" fill="#d4d4d4" fill-opacity="0.44"/>
<rect x="876" y="155" width="1" height="1.6" fill="#d4d4d4" fill-opacity="0.26"/>
<rect x="877" y="155" width="9" height="1.6" fill="#d4d4d4" fill-opacity="0.44"/>
<rect x="886" y="155" width="1" height="1.6" fill="#d4d4d4" fill-opacity="0.26"/>
<rect x="887" y="155" width="4" height="1.6" fill="#d4d4d4" fill-opacity="0.44"/>
<rect x="891" y="155" width="1" height="1.6" fill="#d4d4d4" fill-opacity="0.25"/>
<rect x="838" y="159" width="2" height="1.6" fill="#6a9955" fill-opacity="0.40"/>
<rect x="841" y="159" width="7" height="1.6" fill="#6a9955" fill-opacity="0.44"/>
<rect x="849" y="159" width="9" height="1.6" fill="#6a9955" fill-opacity="0.44"/>
<rect x="859" y="159" width="8" height="1.6" fill="#6a9955" fill-opacity="0.44"/>
<rect x="838" y="161" width="9" height="1.6" fill="#569cd6" fill-opacity="0.44"/>
<rect x="848" y="161" width="3" height="1.6" fill="#d4d4d4" fill-opacity="0.44"/>
<rect x="851" y="161" width="1" height="1.6" fill="#d4d4d4" fill-opacity="0.26"/>
<rect x="852" y="161" width="8" height="1.6" fill="#d4d4d4" fill-opacity="0.44"/>
<rect x="861" y="161" width="8" height="1.6" fill="#d4d4d4" fill-opacity="0.44"/>
<rect x="869" y="161" width="1" height="1.6" fill="#d4d4d4" fill-opacity="0.25"/>
<rect x="838" y="165" width="2" height="1.6" fill="#6a9955" fill-opacity="0.40"/>
<rect x="841" y="165" width="10" height="1.6" fill="#6a9955" fill-opacity="0.44"/>
<rect x="852" y="165" width="3" height="1.6" fill="#6a9955" fill-opacity="0.44"/>
<rect x="856" y="165" width="8" height="1.6" fill="#6a9955" fill-opacity="0.44"/>
<rect x="838" y="167" width="10" height="1.6" fill="#569cd6" fill-opacity="0.44"/>
<rect x="849" y="167" width="6" height="1.6" fill="#d4d4d4" fill-opacity="0.44"/>
<rect x="855" y="167" width="1" height="1.6" fill="#d4d4d4" fill-opacity="0.26"/>
<rect x="856" y="167" width="8" height="1.6" fill="#d4d4d4" fill-opacity="0.44"/>
<rect x="864" y="167" width="1" height="1.6" fill="#d4d4d4" fill-opacity="0.26"/>
<rect x="865" y="167" width="2" height="1.6" fill="#d4d4d4" fill-opacity="0.44"/>
<rect x="867" y="167" width="1" height="1.6" fill="#d4d4d4" fill-opacity="0.25"/>
<rect x="840" y="169" width="6" height="1.6" fill="#d4d4d4" fill-opacity="0.44"/>
<rect x="846" y="169" width="1" height="1.6" fill="#d4d4d4" fill-opacity="0.25"/>
<rect x="847" y="169" width="3" height="1.6" fill="#d4d4d4" fill-opacity="0.44"/>
<rect x="850" y="169" width="1" height="1.6" fill="#d4d4d4" fill-opacity="0.26"/>
<rect x="851" y="169" width="8" height="1.6" fill="#d4d4d4" fill-opacity="0.44"/>
<rect x="860" y="169" width="1" height="1.6" fill="#d4d4d4" fill-opacity="0.26"/>
<rect x="862" y="169" width="1" height="1.6" fill="#d4d4d4" fill-opacity="0.44"/>
<rect x="863" y="169" width="1" height="1.6" fill="#d4d4d4" fill-opacity="0.25"/>
<rect x="840" y="171" width="9" height="1.6" fill="#d4d4d4" fill-opacity="0.44"/>
<rect x="850" y="171" width="1" height="1.6" fill="#d4d4d4" fill-opacity="0.25"/>
<rect x="852" y="171" width="10" height="1.6" fill="#569cd6" fill-opacity="0.44"/>
<rect x="863" y="171" width="8" height="1.6" fill="#d4d4d4" fill-opacity="0.44"/>
<rect x="871" y="171" width="1" height="1.6" fill="#d4d4d4" fill-opacity="0.25"/>
<rect x="872" y="171" width="9" height="1.6" fill="#d4d4d4" fill-opacity="0.44"/>
<rect x="881" y="171" width="1" height="1.6" fill="#d4d4d4" fill-opacity="0.25"/>
<rect x="838" y="173" width="8" height="1.6" fill="#569cd6" fill-opacity="0.44"/>
<rect x="847" y="173" width="1" height="1.6" fill="#d4d4d4" fill-opacity="0.25"/>
<rect x="849" y="173" width="6" height="1.6" fill="#d4d4d4" fill-opacity="0.44"/>
<rect x="855" y="173" width="1" height="1.6" fill="#d4d4d4" fill-opacity="0.26"/>
<rect x="856" y="173" width="8" height="1.6" fill="#d4d4d4" fill-opacity="0.44"/>
<rect x="864" y="173" width="1" height="1.6" fill="#d4d4d4" fill-opacity="0.26"/>
<rect x="865" y="173" width="2" height="1.6" fill="#d4d4d4" fill-opacity="0.44"/>
<rect x="838" y="177" width="2" height="1.6" fill="#6a9955" fill-opacity="0.40"/>
<rect x="841" y="177" width="7" height="1.6" fill="#6a9955" fill-opacity="0.44"/>
<rect x="849" y="177" width="15" height="1.6" fill="#6a9955" fill-opacity="0.44"/>
<rect x="865" y="177" width="2" height="1.6" fill="#6a9955" fill-opacity="0.44"/>
<rect x="868" y="177" width="7" height="1.6" fill="#6a9955" fill-opacity="0.44"/>
<rect x="876" y="177" width="7" height="1.6" fill="#6a9955" fill-opacity="0.44"/>
<rect x="839" y="179" width="1" height="1.6" fill="#d4d4d4" fill-opacity="0.25"/>
<rect x="840" y="179" width="3" height="1.6" fill="#d4d4d4" fill-opacity="0.44"/>
<rect x="843" y="179" width="1" height="1.6" fill="#d4d4d4" fill-opacity="0.26"/>
<rect x="844" y="179" width="9" height="1.6" fill="#d4d4d4" fill-opacity="0.44"/>
<rect x="853" y="179" width="1" height="1.6" fill="#d4d4d4" fill-opacity="0.26"/>
<rect x="854" y="179" width="5" height="1.6" fill="#d4d4d4" fill-opacity="0.44"/>
<rect x="859" y="179" width="1" height="1.6" fill="#d4d4d4" fill-opacity="0.26"/>
<rect x="860" y="179" width="5" height="1.6" fill="#d4d4d4" fill-opacity="0.44"/>
<rect x="865" y="179" width="1" height="1.6" fill="#d4d4d4" fill-opacity="0.40"/>
<rect x="866" y="179" width="3" height="1.6" fill="#d4d4d4" fill-opacity="0.44"/>
<rect x="869" y="179" width="1" height="1.6" fill="#d4d4d4" fill-opacity="0.26"/>
<rect x="870" y="179" width="6" height="1.6" fill="#d4d4d4" fill-opacity="0.44"/>
<rect x="876" y="179" width="1" height="1.6" fill="#d4d4d4" fill-opacity="0.26"/>
<rect x="877" y="179" width="7" height="1.6" fill="#d4d4d4" fill-opacity="0.44"/>
<rect x="884" y="179" width="1" height="1.6" fill="#d4d4d4" fill-opacity="0.40"/>
<rect x="840" y="181" width="1" height="1.6" fill="#d4d4d4" fill-opacity="0.25"/>
<rect x="841" y="181" width="3" height="1.6" fill="#d4d4d4" fill-opacity="0.44"/>
<rect x="844" y="181" width="1" height="1.6" fill="#d4d4d4" fill-opacity="0.26"/>
<rect x="845" y="181" width="5" height="1.6" fill="#d4d4d4" fill-opacity="0.44"/>
<rect x="850" y="181" width="1" height="1.6" fill="#d4d4d4" fill-opacity="0.26"/>
<rect x="851" y="181" width="3" height="1.6" fill="#d4d4d4" fill-opacity="0.44"/>
<rect x="854" y="181" width="1" height="1.6" fill="#d4d4d4" fill-opacity="0.40"/>
<rect x="855" y="181" width="6" height="1.6" fill="#d4d4d4" fill-opacity="0.44"/>
<rect x="861" y="181" width="1" height="1.6" fill="#d4d4d4" fill-opacity="0.26"/>
<rect x="862" y="181" width="6" height="1.6" fill="#d4d4d4" fill-opacity="0.44"/>
<rect x="868" y="181" width="1" height="1.6" fill="#d4d4d4" fill-opacity="0.25"/>
<rect x="870" y="181" width="3" height="1.6" fill="#d4d4d4" fill-opacity="0.44"/>
<rect x="873" y="181" width="1" height="1.6" fill="#d4d4d4" fill-opacity="0.26"/>
<rect x="874" y="181" width="7" height="1.6" fill="#d4d4d4" fill-opacity="0.44"/>
<rect x="881" y="181" width="1" height="1.6" fill="#d4d4d4" fill-opacity="0.40"/>
<rect x="840" y="183" width="1" height="1.6" fill="#d4d4d4" fill-opacity="0.25"/>
<rect x="841" y="183" width="3" height="1.6" fill="#d4d4d4" fill-opacity="0.44"/>
<rect x="844" y="183" width="1" height="1.6" fill="#d4d4d4" fill-opacity="0.26"/>
<rect x="845" y="183" width="5" height="1.6" fill="#d4d4d4" fill-opacity="0.44"/>
<rect x="850" y="183" width="1" height="1.6" fill="#d4d4d4" fill-opacity="0.26"/>
<rect x="851" y="183" width="3" height="1.6" fill="#d4d4d4" fill-opacity="0.44"/>
<rect x="854" y="183" width="1" height="1.6" fill="#d4d4d4" fill-opacity="0.40"/>
<rect x="855" y="183" width="8" height="1.6" fill="#d4d4d4" fill-opacity="0.44"/>
<rect x="863" y="183" width="1" height="1.6" fill="#d4d4d4" fill-opacity="0.26"/>
<rect x="864" y="183" width="6" height="1.6" fill="#d4d4d4" fill-opacity="0.44"/>
<rect x="870" y="183" width="1" height="1.6" fill="#d4d4d4" fill-opacity="0.25"/>
<rect x="872" y="183" width="3" height="1.6" fill="#d4d4d4" fill-opacity="0.44"/>
<rect x="875" y="183" width="1" height="1.6" fill="#d4d4d4" fill-opacity="0.26"/>
<rect x="876" y="183" width="7" height="1.6" fill="#d4d4d4" fill-opacity="0.44"/>
<rect x="883" y="183" width="1" height="1.6" fill="#d4d4d4" fill-opacity="0.40"/>
<rect x="839" y="185" width="1" height="1.6" fill="#d4d4d4" fill-opacity="0.25"/>
<rect x="840" y="185" width="3" height="1.6" fill="#d4d4d4" fill-opacity="0.44"/>
<rect x="843" y="185" width="1" height="1.6" fill="#d4d4d4" fill-opacity="0.26"/>
<rect x="844" y="185" width="9" height="1.6" fill="#d4d4d4" fill-opacity="0.44"/>
<rect x="853" y="185" width="1" height="1.6" fill="#d4d4d4" fill-opacity="0.26"/>
<rect x="854" y="185" width="5" height="1.6" fill="#d4d4d4" fill-opacity="0.44"/>
<rect x="859" y="185" width="1" height="1.6" fill="#d4d4d4" fill-opacity="0.26"/>
<rect x="860" y="185" width="3" height="1.6" fill="#d4d4d4" fill-opacity="0.44"/>
<rect x="838" y="189" width="2" height="1.6" fill="#6a9955" fill-opacity="0.40"/>
<rect x="841" y="189" width="3" height="1.6" fill="#6a9955" fill-opacity="0.44"/>
<rect x="845" y="189" width="1" height="1.6" fill="#6a9955" fill-opacity="0.26"/>
<rect x="847" y="189" width="11" height="1.6" fill="#6a9955" fill-opacity="0.44"/>
<rect x="859" y="189" width="1" height="1.6" fill="#6a9955" fill-opacity="0.25"/>
<rect x="861" y="189" width="6" height="1.6" fill="#6a9955" fill-opacity="0.44"/>
<rect x="868" y="189" width="3" height="1.6" fill="#6a9955" fill-opacity="0.44"/>
<rect x="872" y="189" width="10" height="1.6" fill="#6a9955" fill-opacity="0.44"/>
<rect x="883" y="189" width="3" height="1.6" fill="#6a9955" fill-opacity="0.44"/>
<rect x="887" y="189" width="3" height="1.6" fill="#6a9955" fill-opacity="0.44"/>
<rect x="891" y="189" width="3" height="1.6" fill="#6a9955" fill-opacity="0.44"/>
<rect x="895" y="189" width="4" height="1.6" fill="#6a9955" fill-opacity="0.44"/>
<rect x="900" y="189" width="4" height="1.6" fill="#6a9955" fill-opacity="0.44"/>
<rect x="838" y="191" width="8" height="1.6" fill="#569cd6" fill-opacity="0.44"/>
<rect x="847" y="191" width="3" height="1.6" fill="#d4d4d4" fill-opacity="0.44"/>
<rect x="851" y="191" width="1" height="1.6" fill="#d4d4d4" fill-opacity="0.40"/>
<rect x="852" y="191" width="6" height="1.6" fill="#569cd6" fill-opacity="0.44"/>
<rect x="859" y="191" width="4" height="1.6" fill="#d4d4d4" fill-opacity="0.44"/>
<rect x="863" y="191" width="1" height="1.6" fill="#d4d4d4" fill-opacity="0.25"/>
<rect x="865" y="191" width="3" height="1.6" fill="#d4d4d4" fill-opacity="0.44"/>
<rect x="868" y="191" width="1" height="1.6" fill="#d4d4d4" fill-opacity="0.26"/>
<rect x="869" y="191" width="9" height="1.6" fill="#d4d4d4" fill-opacity="0.44"/>
<rect x="879" y="191" width="6" height="1.6" fill="#d4d4d4" fill-opacity="0.44"/>
<rect x="885" y="191" width="1" height="1.6" fill="#d4d4d4" fill-opacity="0.40"/>
<rect x="886" y="191" width="1" height="1.6" fill="#d4d4d4" fill-opacity="0.25"/>
<rect x="840" y="193" width="5" height="1.6" fill="#569cd6" fill-opacity="0.44"/>
<rect x="845" y="193" width="1" height="1.6" fill="#d4d4d4" fill-opacity="0.25"/>
<rect x="846" y="193" width="3" height="1.6" fill="#d4d4d4" fill-opacity="0.44"/>
<rect x="849" y="193" width="1" height="1.6" fill="#d4d4d4" fill-opacity="0.40"/>
<rect x="850" y="193" width="4" height="1.6" fill="#d4d4d4" fill-opacity="0.44"/>
<rect x="854" y="193" width="1" height="1.6" fill="#d4d4d4" fill-opacity="0.25"/>
<rect x="856" y="193" width="6" height="1.6" fill="#d4d4d4" fill-opacity="0.44"/>
<rect x="862" y="193" width="1" height="1.6" fill="#d4d4d4" fill-opacity="0.40"/>
<rect x="863" y="193" width="1" height="1.6" fill="#d4d4d4" fill-opacity="0.25"/>
<rect x="840" y="195" width="2" height="1.6" fill="#6a9955" fill-opacity="0.40"/>
<rect x="843" y="195" width="6" height="1.6" fill="#6a9955" fill-opacity="0.44"/>
<rect x="850" y="195" width="3" height="1.6" fill="#6a9955" fill-opacity="0.44"/>
<rect x="854" y="195" width="10" height="1.6" fill="#6a9955" fill-opacity="0.44"/>
<rect x="840" y="197" width="6" height="1.6" fill="#d4d4d4" fill-opacity="0.44"/>
<rect x="846" y="197" width="1" height="1.6" fill="#d4d4d4" fill-opacity="0.26"/>
<rect x="847" y="197" width="2" height="1.6" fill="#d4d4d4" fill-opacity="0.44"/>
<rect x="850" y="197" width="1" height="1.6" fill="#d4d4d4" fill-opacity="0.26"/>
<rect x="852" y="197" width="3" height="1.6" fill="#569cd6" fill-opacity="0.44"/>
<rect x="855" y="197" width="2" height="1.6" fill="#d4d4d4" fill-opacity="0.40"/>
<rect x="857" y="197" width="1" height="1.6" fill="#d4d4d4" fill-opacity="0.25"/>
<rect x="840" y="199" width="6" height="1.6" fill="#d4d4d4" fill-opacity="0.44"/>
<rect x="846" y="199" width="1" height="1.6" fill="#d4d4d4" fill-opacity="0.26"/>
<rect x="847" y="199" width="2" height="1.6" fill="#d4d4d4" fill-opacity="0.44"/>
<rect x="849" y="199" width="1" height="1.6" fill="#d4d4d4" fill-opacity="0.25"/>
<rect x="850" y="199" width="3" height="1.6" fill="#d4d4d4" fill-opacity="0.44"/>
<rect x="853" y="199" width="1" height="1.6" fill="#d4d4d4" fill-opacity="0.26"/>
<rect x="854" y="199" width="4" height="1.6" fill="#d4d4d4" fill-opacity="0.44"/>
<rect x="858" y="199" width="1" height="1.6" fill="#d4d4d4" fill-opacity="0.26"/>
<rect x="859" y="199" width="4" height="1.6" fill="#d4d4d4" fill-opacity="0.44"/>
<rect x="863" y="199" width="2" height="1.6" fill="#d4d4d4" fill-opacity="0.40"/>
<rect x="865" y="199" width="3" height="1.6" fill="#d4d4d4" fill-opacity="0.44"/>
<rect x="868" y="199" width="1" height="1.6" fill="#d4d4d4" fill-opacity="0.26"/>
<rect x="869" y="199" width="4" height="1.6" fill="#d4d4d4" fill-opacity="0.44"/>
<rect x="873" y="199" width="1" height="1.6" fill="#d4d4d4" fill-opacity="0.26"/>
<rect x="874" y="199" width="4" height="1.6" fill="#d4d4d4" fill-opacity="0.44"/>
<rect x="878" y="199" width="2" height="1.6" fill="#d4d4d4" fill-opacity="0.40"/>
<rect x="880" y="199" width="1" height="1.6" fill="#d4d4d4" fill-opacity="0.25"/>
<rect x="882" y="199" width="2" height="1.6" fill="#ce9178" fill-opacity="0.25"/>
<rect x="884" y="199" width="6" height="1.6" fill="#ce9178" fill-opacity="0.44"/>
<rect x="890" y="199" width="1" height="1.6" fill="#ce9178" fill-opacity="0.26"/>
<rect x="891" y="199" width="2" height="1.6" fill="#ce9178" fill-opacity="0.44"/>
<rect x="893" y="199" width="1" height="1.6" fill="#ce9178" fill-opacity="0.25"/>
<rect x="894" y="199" width="2" height="1.6" fill="#d4d4d4" fill-opacity="0.40"/>
<rect x="896" y="199" width="1" height="1.6" fill="#d4d4d4" fill-opacity="0.25"/>
<rect x="840" y="201" width="2" height="1.6" fill="#6a9955" fill-opacity="0.40"/>
<rect x="843" y="201" width="6" height="1.6" fill="#6a9955" fill-opacity="0.44"/>
<rect x="850" y="201" width="3" height="1.6" fill="#6a9955" fill-opacity="0.44"/>
<rect x="854" y="201" width="3" height="1.6" fill="#6a9955" fill-opacity="0.44"/>
<rect x="858" y="201" width="4" height="1.6" fill="#6a9955" fill-opacity="0.44"/>
<rect x="840" y="203" width="4" height="1.6" fill="#d4d4d4" fill-opacity="0.44"/>
<rect x="844" y="203" width="1" height="1.6" fill="#d4d4d4" fill-opacity="0.26"/>
<rect x="845" y="203" width="9" height="1.6" fill="#d4d4d4" fill-opacity="0.44"/>
<rect x="854" y="203" width="1" height="1.6" fill="#d4d4d4" fill-opacity="0.26"/>
<rect x="855" y="203" width="4" height="1.6" fill="#d4d4d4" fill-opacity="0.44"/>
<rect x="860" y="203" width="1" height="1.6" fill="#d4d4d4" fill-opacity="0.26"/>
<rect x="862" y="203" width="3" height="1.6" fill="#569cd6" fill-opacity="0.44"/>
<rect x="865" y="203" width="1" height="1.6" fill="#d4d4d4" fill-opacity="0.40"/>
<rect x="866" y="203" width="1" height="1.6" fill="#ce9178" fill-opacity="0.25"/>
<rect x="867" y="203" width="4" height="1.6" fill="#ce9178" fill-opacity="0.44"/>
<rect x="871" y="203" width="1" height="1.6" fill="#ce9178" fill-opacity="0.26"/>
<rect x="872" y="203" width="9" height="1.6" fill="#ce9178" fill-opacity="0.44"/>
<rect x="881" y="203" width="1" height="1.6" fill="#ce9178" fill-opacity="0.26"/>
<rect x="882" y="203" width="4" height="1.6" fill="#ce9178" fill-opacity="0.44"/>
<rect x="886" y="203" width="1" height="1.6" fill="#ce9178" fill-opacity="0.25"/>
<rect x="887" y="203" width="1" height="1.6" fill="#d4d4d4" fill-opacity="0.25"/>
<rect x="889" y="203" width="4" height="1.6" fill="#569cd6" fill-opacity="0.44"/>
<rect x="893" y="203" width="1" height="1.6" fill="#d4d4d4" fill-opacity="0.40"/>
<rect x="894" y="203" width="1" height="1.6" fill="#d4d4d4" fill-opacity="0.25"/>
<rect x="838" y="205" width="11" height="1.6" fill="#569cd6" fill-opacity="0.44"/>
<rect x="850" y="205" width="1" height="1.6" fill="#d4d4d4" fill-opacity="0.25"/>
<rect x="852" y="205" width="3" height="1.6" fill="#d4d4d4" fill-opacity="0.44"/>
<rect x="838" y="209" width="2" height="1.6" fill="#6a9955" fill-opacity="0.40"/>
<rect x="841" y="209" width="10" height="1.6" fill="#6a9955" fill-opacity="0.44"/>
<rect x="852" y="209" width="5" height="1.6" fill="#6a9955" fill-opacity="0.44"/>
<rect x="858" y="209" width="7" height="1.6" fill="#6a9955" fill-opacity="0.44"/>
<rect x="838" y="211" width="6" height="1.6" fill="#569cd6" fill-opacity="0.44"/>
<rect x="845" y="211" width="7" height="1.6" fill="#569cd6" fill-opacity="0.44"/>
<rect x="853" y="211" width="4" height="1.6" fill="#569cd6" fill-opacity="0.44"/>
<rect x="858" y="211" width="3" height="1.6" fill="#d4d4d4" fill-opacity="0.44"/>
<rect x="861" y="211" width="1" height="1.6" fill="#d4d4d4" fill-opacity="0.26"/>
<rect x="862" y="211" width="5" height="1.6" fill="#d4d4d4" fill-opacity="0.44"/>
<rect x="867" y="211" width="1" height="1.6" fill="#d4d4d4" fill-opacity="0.40"/>
<rect x="868" y="211" width="3" height="1.6" fill="#d4d4d4" fill-opacity="0.44"/>
<rect x="871" y="211" width="1" height="1.6" fill="#d4d4d4" fill-opacity="0.26"/>
<rect x="872" y="211" width="5" height="1.6" fill="#d4d4d4" fill-opacity="0.44"/>
<rect x="878" y="211" width="5" height="1.6" fill="#d4d4d4" fill-opacity="0.44"/>
<rect x="883" y="211" width="1" height="1.6" fill="#d4d4d4" fill-opacity="0.40"/>
<rect x="884" y="211" width="1" height="1.6" fill="#d4d4d4" fill-opacity="0.25"/>
<rect x="838" y="213" width="6" height="1.6" fill="#569cd6" fill-opacity="0.44"/>
<rect x="845" y="213" width="7" height="1.6" fill="#569cd6" fill-opacity="0.44"/>
<rect x="853" y="213" width="8" height="1.6" fill="#569cd6" fill-opacity="0.44"/>
<rect x="862" y="213" width="4" height="1.6" fill="#569cd6" fill-opacity="0.44"/>
<rect x="867" y="213" width="7" height="1.6" fill="#d4d4d4" fill-opacity="0.44"/>
<rect x="874" y="213" width="1" height="1.6" fill="#d4d4d4" fill-opacity="0.26"/>
<rect x="875" y="213" width="5" height="1.6" fill="#d4d4d4" fill-opacity="0.44"/>
<rect x="880" y="213" width="1" height="1.6" fill="#d4d4d4" fill-opacity="0.40"/>
<rect x="881" y="213" width="3" height="1.6" fill="#d4d4d4" fill-opacity="0.44"/>
<rect x="884" y="213" width="1" height="1.6" fill="#d4d4d4" fill-opacity="0.26"/>
<rect x="885" y="213" width="5" height="1.6" fill="#d4d4d4" fill-opacity="0.44"/>
<rect x="891" y="213" width="5" height="1.6" fill="#d4d4d4" fill-opacity="0.44"/>
<rect x="896" y="213" width="1" height="1.6" fill="#d4d4d4" fill-opacity="0.40"/>
<rect x="897" y="213" width="1" height="1.6" fill="#d4d4d4" fill-opacity="0.25"/>
<rect x="838" y="215" width="6" height="1.6" fill="#569cd6" fill-opacity="0.44"/>
<rect x="845" y="215" width="7" height="1.6" fill="#569cd6" fill-opacity="0.44"/>
<rect x="853" y="215" width="9" height="1.6" fill="#569cd6" fill-opacity="0.44"/>
<rect x="863" y="215" width="4" height="1.6" fill="#569cd6" fill-opacity="0.44"/>
<rect x="868" y="215" width="7" height="1.6" fill="#d4d4d4" fill-opacity="0.44"/>
<rect x="875" y="215" width="1" height="1.6" fill="#d4d4d4" fill-opacity="0.26"/>
<rect x="876" y="215" width="8" height="1.6" fill="#d4d4d4" fill-opacity="0.44"/>
<rect x="884" y="215" width="2" height="1.6" fill="#d4d4d4" fill-opacity="0.40"/>
<rect x="886" y="215" width="1" height="1.6" fill="#d4d4d4" fill-opacity="0.25"/>
<rect x="838" y="217" width="6" height="1.6" fill="#569cd6" fill-opacity="0.44"/>
<rect x="845" y="217" width="7" height="1.6" fill="#569cd6" fill-opacity="0.44"/>
<rect x="853" y="217" width="9" height="1.6" fill="#569cd6" fill-opacity="0.44"/>
<rect x="863" y="217" width="8" height="1.6" fill="#569cd6" fill-opacity="0.44"/>
<rect x="872" y="217" width="4" height="1.6" fill="#569cd6" fill-opacity="0.44"/>
<rect x="877" y="217" width="7" height="1.6" fill="#d4d4d4" fill-opacity="0.44"/>
<rect x="884" y="217" width="1" height="1.6" fill="#d4d4d4" fill-opacity="0.26"/>
<rect x="885" y="217" width="6" height="1.6" fill="#d4d4d4" fill-opacity="0.44"/>
<rect x="891" y="217" width="2" height="1.6" fill="#d4d4d4" fill-opacity="0.40"/>
<rect x="893" y="217" width="1" height="1.6" fill="#d4d4d4" fill-opacity="0.25"/>
<rect x="838" y="219" width="6" height="1.6" fill="#569cd6" fill-opacity="0.44"/>
<rect x="845" y="219" width="7" height="1.6" fill="#569cd6" fill-opacity="0.44"/>
<rect x="853" y="219" width="9" height="1.6" fill="#569cd6" fill-opacity="0.44"/>
<rect x="863" y="219" width="8" height="1.6" fill="#569cd6" fill-opacity="0.44"/>
<rect x="872" y="219" width="4" height="1.6" fill="#569cd6" fill-opacity="0.44"/>
<rect x="877" y="219" width="7" height="1.6" fill="#d4d4d4" fill-opacity="0.44"/>
<rect x="884" y="219" width="1" height="1.6" fill="#d4d4d4" fill-opacity="0.26"/>
<rect x="885" y="219" width="8" height="1.6" fill="#d4d4d4" fill-opacity="0.44"/>
<rect x="893" y="219" width="2" height="1.6" fill="#d4d4d4" fill-opacity="0.40"/>
<rect x="895" y="219" width="1" height="1.6" fill="#d4d4d4" fill-opacity="0.25"/>
<rect x="838" y="221" width="6" height="1.6" fill="#569cd6" fill-opacity="0.44"/>
<rect x="845" y="221" width="7" height="1.6" fill="#569cd6" fill-opacity="0.44"/>
<rect x="853" y="221" width="8" height="1.6" fill="#569cd6" fill-opacity="0.44"/>
<rect x="862" y="221" width="4" height="1.6" fill="#569cd6" fill-opacity="0.44"/>
<rect x="867" y="221" width="6" height="1.6" fill="#d4d4d4" fill-opacity="0.44"/>
<rect x="873" y="221" width="2" height="1.6" fill="#d4d4d4" fill-opacity="0.40"/>
<rect x="875" y="221" width="1" height="1.6" fill="#d4d4d4" fill-opacity="0.25"/>
<rect x="836" y="225" width="8" height="1.6" fill="#569cd6" fill-opacity="0.44"/>
<rect x="845" y="225" width="1" height="1.6" fill="#d4d4d4" fill-opacity="0.25"/>
<rect x="847" y="225" width="3" height="1.6" fill="#d4d4d4" fill-opacity="0.44"/>
<rect x="850" y="225" width="1" height="1.6" fill="#d4d4d4" fill-opacity="0.26"/>
<rect x="851" y="225" width="6" height="1.6" fill="#d4d4d4" fill-opacity="0.44"/>
<rect x="857" y="225" width="1" height="1.6" fill="#d4d4d4" fill-opacity="0.26"/>
<rect x="858" y="225" width="7" height="1.6" fill="#d4d4d4" fill-opacity="0.44"/>
<rect x="836" y="229" width="2" height="1.6" fill="#6a9955" fill-opacity="0.40"/>
<rect x="838" y="229" width="3" height="1.6" fill="#6a9955" fill-opacity="0.44"/>
<rect x="842" y="229" width="7" height="1.6" fill="#6a9955" fill-opacity="0.44"/>
<rect x="849" y="229" width="1" height="1.6" fill="#6a9955" fill-opacity="0.26"/>
<rect x="850" y="229" width="5" height="1.6" fill="#6a9955" fill-opacity="0.44"/>
<rect x="836" y="231" width="8" height="1.6" fill="#569cd6" fill-opacity="0.44"/>
<rect x="845" y="231" width="4" height="1.6" fill="#569cd6" fill-opacity="0.44"/>
<rect x="850" y="231" width="3" height="1.6" fill="#d4d4d4" fill-opacity="0.44"/>
<rect x="853" y="231" width="1" height="1.6" fill="#d4d4d4" fill-opacity="0.26"/>
<rect x="854" y="231" width="6" height="1.6" fill="#d4d4d4" fill-opacity="0.44"/>
<rect x="860" y="231" width="1" height="1.6" fill="#d4d4d4" fill-opacity="0.26"/>
<rect x="861" y="231" width="7" height="1.6" fill="#d4d4d4" fill-opacity="0.44"/>
<rect x="868" y="231" width="2" height="1.6" fill="#d4d4d4" fill-opacity="0.25"/>
<rect x="870" y="231" width="7" height="1.6" fill="#d4d4d4" fill-opacity="0.44"/>
<rect x="877" y="231" width="1" height="1.6" fill="#d4d4d4" fill-opacity="0.26"/>
<rect x="878" y="231" width="5" height="1.6" fill="#d4d4d4" fill-opacity="0.44"/>
<rect x="883" y="231" width="1" height="1.6" fill="#d4d4d4" fill-opacity="0.40"/>
<rect x="884" y="231" width="3" height="1.6" fill="#d4d4d4" fill-opacity="0.44"/>
<rect x="887" y="231" width="1" height="1.6" fill="#d4d4d4" fill-opacity="0.26"/>
<rect x="888" y="231" width="5" height="1.6" fill="#d4d4d4" fill-opacity="0.44"/>
<rect x="894" y="231" width="5" height="1.6" fill="#d4d4d4" fill-opacity="0.44"/>
<rect x="899" y="231" width="1" height="1.6" fill="#d4d4d4" fill-opacity="0.40"/>
<rect x="900" y="231" width="1" height="1.6" fill="#d4d4d4" fill-opacity="0.25"/>
<rect x="838" y="233" width="5" height="1.6" fill="#569cd6" fill-opacity="0.44"/>
<rect x="843" y="233" width="1" height="1.6" fill="#d4d4d4" fill-opacity="0.25"/>
<rect x="844" y="233" width="7" height="1.6" fill="#d4d4d4" fill-opacity="0.44"/>
<rect x="851" y="233" width="1" height="1.6" fill="#d4d4d4" fill-opacity="0.26"/>
<rect x="852" y="233" width="5" height="1.6" fill="#d4d4d4" fill-opacity="0.44"/>
<rect x="857" y="233" width="1" height="1.6" fill="#d4d4d4" fill-opacity="0.40"/>
<rect x="858" y="233" width="5" height="1.6" fill="#d4d4d4" fill-opacity="0.44"/>
<rect x="863" y="233" width="1" height="1.6" fill="#d4d4d4" fill-opacity="0.40"/>
<rect x="864" y="233" width="1" height="1.6" fill="#d4d4d4" fill-opacity="0.25"/>
<rect x="838" y="235" width="2" height="1.6" fill="#569cd6" fill-opacity="0.44"/>
<rect x="841" y="235" width="2" height="1.6" fill="#d4d4d4" fill-opacity="0.40"/>
<rect x="843" y="235" width="3" height="1.6" fill="#d4d4d4" fill-opacity="0.44"/>
<rect x="846" y="235" width="1" height="1.6" fill="#d4d4d4" fill-opacity="0.26"/>
<rect x="847" y="235" width="6" height="1.6" fill="#d4d4d4" fill-opacity="0.44"/>
<rect x="853" y="235" width="1" height="1.6" fill="#d4d4d4" fill-opacity="0.26"/>
<rect x="854" y="235" width="2" height="1.6" fill="#d4d4d4" fill-opacity="0.44"/>
<rect x="856" y="235" width="2" height="1.6" fill="#d4d4d4" fill-opacity="0.40"/>
<rect x="858" y="235" width="7" height="1.6" fill="#569cd6" fill-opacity="0.44"/>
<rect x="866" y="235" width="3" height="1.6" fill="#d4d4d4" fill-opacity="0.44"/>
<rect x="869" y="235" width="1" height="1.6" fill="#d4d4d4" fill-opacity="0.26"/>
<rect x="870" y="235" width="2" height="1.6" fill="#d4d4d4" fill-opacity="0.44"/>
<rect x="872" y="235" width="1" height="1.6" fill="#d4d4d4" fill-opacity="0.40"/>
<rect x="873" y="235" width="2" height="1.6" fill="#d4d4d4" fill-opacity="0.25"/>
<rect x="875" y="235" width="3" height="1.6" fill="#d4d4d4" fill-opacity="0.44"/>
<rect x="878" y="235" width="1" height="1.6" fill="#d4d4d4" fill-opacity="0.40"/>
<rect x="879" y="235" width="4" height="1.6" fill="#569cd6" fill-opacity="0.44"/>
<rect x="883" y="235" width="1" height="1.6" fill="#d4d4d4" fill-opacity="0.25"/>
<rect x="885" y="235" width="2" height="1.6" fill="#ce9178" fill-opacity="0.25"/>
<rect x="887" y="235" width="1" height="1.6" fill="#d4d4d4" fill-opacity="0.25"/>
<rect x="889" y="235" width="1" height="1.6" fill="#ce9178" fill-opacity="0.25"/>
<rect x="890" y="235" width="3" height="1.6" fill="#ce9178" fill-opacity="0.44"/>
<rect x="893" y="235" width="1" height="1.6" fill="#ce9178" fill-opacity="0.25"/>
<rect x="894" y="235" width="1" height="1.6" fill="#d4d4d4" fill-opacity="0.25"/>
<rect x="896" y="235" width="3" height="1.6" fill="#d4d4d4" fill-opacity="0.44"/>
<rect x="899" y="235" width="2" height="1.6" fill="#d4d4d4" fill-opacity="0.40"/>
<rect x="840" y="237" width="1" height="1.6" fill="#d4d4d4" fill-opacity="0.25"/>
<rect x="841" y="237" width="3" height="1.6" fill="#d4d4d4" fill-opacity="0.44"/>
<rect x="844" y="237" width="1" height="1.6" fill="#d4d4d4" fill-opacity="0.26"/>
<rect x="845" y="237" width="5" height="1.6" fill="#d4d4d4" fill-opacity="0.44"/>
<rect x="850" y="237" width="1" height="1.6" fill="#d4d4d4" fill-opacity="0.40"/>
<rect x="851" y="237" width="1" height="1.6" fill="#ce9178" fill-opacity="0.25"/>
<rect x="852" y="237" width="5" height="1.6" fill="#ce9178" fill-opacity="0.44"/>
<rect x="857" y="237" width="1" height="1.6" fill="#ce9178" fill-opacity="0.25"/>
<rect x="858" y="237" width="1" height="1.6" fill="#d4d4d4" fill-opacity="0.25"/>
<rect x="859" y="237" width="1" height="1.6" fill="#d4d4d4" fill-opacity="0.40"/>
<rect x="860" y="237" width="1" height="1.6" fill="#ce9178" fill-opacity="0.25"/>
<rect x="861" y="237" width="7" height="1.6" fill="#ce9178" fill-opacity="0.44"/>
<rect x="869" y="237" width="9" height="1.6" fill="#ce9178" fill-opacity="0.44"/>
<rect x="879" y="237" width="4" height="1.6" fill="#ce9178" fill-opacity="0.44"/>
<rect x="884" y="237" width="2" height="1.6" fill="#ce9178" fill-opacity="0.44"/>
<rect x="887" y="237" width="3" height="1.6" fill="#ce9178" fill-opacity="0.44"/>
<rect x="891" y="237" width="3" height="1.6" fill="#ce9178" fill-opacity="0.44"/>
<rect x="894" y="237" width="1" height="1.6" fill="#ce9178" fill-opacity="0.25"/>
<rect x="896" y="237" width="1" height="1.6" fill="#ce9178" fill-opacity="0.25"/>
<rect x="897" y="237" width="1" height="1.6" fill="#d4d4d4" fill-opacity="0.25"/>
<rect x="898" y="237" width="3" height="1.6" fill="#d4d4d4" fill-opacity="0.44"/>
<rect x="901" y="237" width="1" height="1.6" fill="#d4d4d4" fill-opacity="0.26"/>
<rect x="902" y="237" width="4" height="1.6" fill="#d4d4d4" fill-opacity="0.44"/>
<rect x="906" y="237" width="1" height="1.6" fill="#d4d4d4" fill-opacity="0.26"/>
<rect x="907" y="237" width="4" height="1.6" fill="#d4d4d4" fill-opacity="0.44"/>
<rect x="911" y="237" width="2" height="1.6" fill="#d4d4d4" fill-opacity="0.40"/>
<rect x="913" y="237" width="1" height="1.6" fill="#d4d4d4" fill-opacity="0.25"/>
<rect x="836" y="239" width="11" height="1.6" fill="#569cd6" fill-opacity="0.44"/>
<rect x="848" y="239" width="1" height="1.6" fill="#d4d4d4" fill-opacity="0.25"/>
<rect x="850" y="239" width="7" height="1.6" fill="#d4d4d4" fill-opacity="0.44"/>
<rect x="857" y="239" width="1" height="1.6" fill="#d4d4d4" fill-opacity="0.26"/>
<rect x="858" y="239" width="5" height="1.6" fill="#d4d4d4" fill-opacity="0.44"/>
<rect x="836" y="243" width="2" height="1.6" fill="#6a9955" fill-opacity="0.40"/>
<rect x="839" y="243" width="3" height="1.6" fill="#6a9955" fill-opacity="0.44"/>
<rect x="843" y="243" width="3" height="1.6" fill="#6a9955" fill-opacity="0.44"/>
<rect x="846" y="243" width="2" height="1.6" fill="#6a9955" fill-opacity="0.40"/>
<rect x="849" y="243" width="5" height="1.6" fill="#6a9955" fill-opacity="0.44"/>
<rect x="836" y="245" width="4" height="1.6" fill="#569cd6" fill-opacity="0.44"/>
<rect x="841" y="245" width="3" height="1.6" fill="#d4d4d4" fill-opacity="0.44"/>
<rect x="844" y="245" width="1" height="1.6" fill="#d4d4d4" fill-opacity="0.26"/>
<rect x="845" y="245" width="6" height="1.6" fill="#d4d4d4" fill-opacity="0.44"/>
<rect x="851" y="245" width="1" height="1.6" fill="#d4d4d4" fill-opacity="0.26"/>
<rect x="852" y="245" width="7" height="1.6" fill="#d4d4d4" fill-opacity="0.44"/>
<rect x="859" y="245" width="2" height="1.6" fill="#d4d4d4" fill-opacity="0.25"/>
<rect x="861" y="245" width="3" height="1.6" fill="#d4d4d4" fill-opacity="0.44"/>
<rect x="864" y="245" width="1" height="1.6" fill="#d4d4d4" fill-opacity="0.26"/>
<rect x="865" y="245" width="5" height="1.6" fill="#d4d4d4" fill-opacity="0.44"/>
<rect x="870" y="245" width="1" height="1.6" fill="#d4d4d4" fill-opacity="0.40"/>
<rect x="871" y="245" width="3" height="1.6" fill="#d4d4d4" fill-opacity="0.44"/>
<rect x="874" y="245" width="1" height="1.6" fill="#d4d4d4" fill-opacity="0.26"/>
<rect x="875" y="245" width="5" height="1.6" fill="#d4d4d4" fill-opacity="0.44"/>
<rect x="881" y="245" width="5" height="1.6" fill="#d4d4d4" fill-opacity="0.44"/>
<rect x="886" y="245" width="1" height="1.6" fill="#d4d4d4" fill-opacity="0.40"/>
<rect x="887" y="245" width="1" height="1.6" fill="#d4d4d4" fill-opacity="0.25"/>
<rect x="838" y="247" width="4" height="1.6" fill="#569cd6" fill-opacity="0.44"/>
<rect x="840" y="249" width="7" height="1.6" fill="#d4d4d4" fill-opacity="0.44"/>
<rect x="847" y="249" width="1" height="1.6" fill="#d4d4d4" fill-opacity="0.26"/>
<rect x="848" y="249" width="8" height="1.6" fill="#d4d4d4" fill-opacity="0.44"/>
<rect x="856" y="249" width="2" height="1.6" fill="#d4d4d4" fill-opacity="0.40"/>
<rect x="858" y="249" width="1" height="1.6" fill="#d4d4d4" fill-opacity="0.25"/>
<rect x="838" y="251" width="4" height="1.6" fill="#569cd6" fill-opacity="0.44"/>
<rect x="842" y="251" width="1" height="1.6" fill="#569cd6" fill-opacity="0.26"/>
<rect x="843" y="251" width="4" height="1.6" fill="#569cd6" fill-opacity="0.44"/>
<rect x="836" y="253" width="7" height="1.6" fill="#569cd6" fill-opacity="0.44"/>
<rect x="844" y="253" width="1" height="1.6" fill="#d4d4d4" fill-opacity="0.25"/>
<rect x="846" y="253" width="3" height="1.6" fill="#d4d4d4" fill-opacity="0.44"/>
<rect x="849" y="253" width="1" height="1.6" fill="#d4d4d4" fill-opacity="0.26"/>
<rect x="850" y="253" width="5" height="1.6" fill="#d4d4d4" fill-opacity="0.44"/>
<rect x="836" y="257" width="76" height="1.6" fill="#6a9955" fill-opacity="0.40"/>
<rect x="837" y="259" width="3" height="1.6" fill="#6a9955" fill-opacity="0.44"/>
<rect x="840" y="259" width="1" height="1.6" fill="#6a9955" fill-opacity="0.26"/>
<rect x="841" y="259" width="4" height="1.6" fill="#f44747" fill-opacity="0.44"/>
<rect x="846" y="259" width="1" height="1.6" fill="#6a9955" fill-opacity="0.25"/>
<rect x="848" y="259" width="8" height="1.6" fill="#6a9955" fill-opacity="0.44"/>
<rect x="857" y="259" width="1" height="1.6" fill="#6a9955" fill-opacity="0.25"/>
<rect x="859" y="259" width="6" height="1.6" fill="#6a9955" fill-opacity="0.44"/>
<rect x="866" y="259" width="7" height="1.6" fill="#6a9955" fill-opacity="0.44"/>
<rect x="874" y="259" width="1" height="1.6" fill="#6a9955" fill-opacity="0.25"/>
<rect x="876" y="259" width="8" height="1.6" fill="#6a9955" fill-opacity="0.44"/>
<rect x="837" y="261" width="73" height="1.6" fill="#6a9955" fill-opacity="0.26"/>
<rect x="837" y="263" width="6" height="1.6" fill="#6a9955" fill-opacity="0.44"/>
<rect x="844" y="263" width="3" height="1.6" fill="#6a9955" fill-opacity="0.44"/>
<rect x="848" y="263" width="7" height="1.6" fill="#6a9955" fill-opacity="0.44"/>
<rect x="855" y="263" width="1" height="1.6" fill="#6a9955" fill-opacity="0.26"/>
<rect x="856" y="263" width="9" height="1.6" fill="#6a9955" fill-opacity="0.44"/>
<rect x="865" y="263" width="2" height="1.6" fill="#6a9955" fill-opacity="0.40"/>
<rect x="868" y="263" width="6" height="1.6" fill="#6a9955" fill-opacity="0.44"/>
<rect x="875" y="263" width="2" height="1.6" fill="#6a9955" fill-opacity="0.44"/>
<rect x="878" y="263" width="5" height="1.6" fill="#6a9955" fill-opacity="0.44"/>
<rect x="884" y="263" width="4" height="1.6" fill="#6a9955" fill-opacity="0.44"/>
<rect x="889" y="263" width="8" height="1.6" fill="#6a9955" fill-opacity="0.44"/>
<rect x="897" y="263" width="1" height="1.6" fill="#6a9955" fill-opacity="0.25"/>
<rect x="837" y="265" width="4" height="1.6" fill="#f44747" fill-opacity="0.44"/>
<rect x="842" y="265" width="4" height="1.6" fill="#6a9955" fill-opacity="0.44"/>
<rect x="847" y="265" width="2" height="1.6" fill="#6a9955" fill-opacity="0.44"/>
<rect x="850" y="265" width="3" height="1.6" fill="#6a9955" fill-opacity="0.44"/>
<rect x="854" y="265" width="6" height="1.6" fill="#6a9955" fill-opacity="0.44"/>
<rect x="860" y="265" width="1" height="1.6" fill="#6a9955" fill-opacity="0.40"/>
<rect x="861" y="265" width="3" height="1.6" fill="#6a9955" fill-opacity="0.44"/>
<rect x="865" y="265" width="7" height="1.6" fill="#6a9955" fill-opacity="0.44"/>
<rect x="873" y="265" width="2" height="1.6" fill="#6a9955" fill-opacity="0.44"/>
<rect x="876" y="265" width="3" height="1.6" fill="#6a9955" fill-opacity="0.44"/>
<rect x="880" y="265" width="8" height="1.6" fill="#6a9955" fill-opacity="0.44"/>
<rect x="889" y="265" width="9" height="1.6" fill="#6a9955" fill-opacity="0.44"/>
<rect x="898" y="265" width="1" height="1.6" fill="#6a9955" fill-opacity="0.25"/>
<rect x="900" y="265" width="3" height="1.6" fill="#6a9955" fill-opacity="0.44"/>
<rect x="904" y="265" width="4" height="1.6" fill="#6a9955" fill-opacity="0.44"/>
<rect x="837" y="267" width="4" height="1.6" fill="#6a9955" fill-opacity="0.44"/>
<rect x="842" y="267" width="6" height="1.6" fill="#6a9955" fill-opacity="0.44"/>
<rect x="849" y="267" width="4" height="1.6" fill="#6a9955" fill-opacity="0.44"/>
<rect x="854" y="267" width="6" height="1.6" fill="#6a9955" fill-opacity="0.44"/>
<rect x="860" y="267" width="1" height="1.6" fill="#6a9955" fill-opacity="0.25"/>
<rect x="837" y="269" width="76" height="1.6" fill="#6a9955" fill-opacity="0.40"/>
<rect x="836" y="273" width="4" height="1.6" fill="#569cd6" fill-opacity="0.44"/>
<rect x="841" y="273" width="3" height="1.6" fill="#d4d4d4" fill-opacity="0.44"/>
<rect x="844" y="273" width="1" height="1.6" fill="#d4d4d4" fill-opacity="0.26"/>
<rect x="845" y="273" width="6" height="1.6" fill="#d4d4d4" fill-opacity="0.44"/>
<rect x="851" y="273" width="1" height="1.6" fill="#d4d4d4" fill-opacity="0.26"/>
<rect x="852" y="273" width="7" height="1.6" fill="#d4d4d4" fill-opacity="0.44"/>
<rect x="859" y="273" width="2" height="1.6" fill="#d4d4d4" fill-opacity="0.25"/>
<rect x="861" y="273" width="7" height="1.6" fill="#d4d4d4" fill-opacity="0.44"/>
<rect x="868" y="273" width="1" height="1.6" fill="#d4d4d4" fill-opacity="0.26"/>
<rect x="869" y="273" width="8" height="1.6" fill="#d4d4d4" fill-opacity="0.44"/>
<rect x="877" y="273" width="2" height="1.6" fill="#d4d4d4" fill-opacity="0.40"/>
<rect x="879" y="273" width="1" height="1.6" fill="#d4d4d4" fill-opacity="0.25"/>
<rect x="838" y="275" width="2" height="1.6" fill="#6a9955" fill-opacity="0.40"/>
<rect x="841" y="275" width="4" height="1.6" fill="#6a9955" fill-opacity="0.44"/>
<rect x="846" y="275" width="7" height="1.6" fill="#6a9955" fill-opacity="0.44"/>
<rect x="854" y="275" width="2" height="1.6" fill="#6a9955" fill-opacity="0.44"/>
<rect x="856" y="275" width="1" height="1.6" fill="#6a9955" fill-opacity="0.26"/>
<rect x="857" y="275" width="4" height="1.6" fill="#6a9955" fill-opacity="0.44"/>
<rect x="862" y="275" width="3" height="1.6" fill="#6a9955" fill-opacity="0.44"/>
<rect x="866" y="275" width="4" height="1.6" fill="#6a9955" fill-opacity="0.44"/>
<rect x="871" y="275" width="5" height="1.6" fill="#6a9955" fill-opacity="0.44"/>
<rect x="877" y="275" width="3" height="1.6" fill="#6a9955" fill-opacity="0.44"/>
<rect x="881" y="275" width="3" height="1.6" fill="#6a9955" fill-opacity="0.44"/>
<rect x="885" y="275" width="9" height="1.6" fill="#6a9955" fill-opacity="0.44"/>
<rect x="838" y="277" width="8" height="1.6" fill="#d4d4d4" fill-opacity="0.44"/>
<rect x="847" y="277" width="1" height="1.6" fill="#d4d4d4" fill-opacity="0.26"/>
<rect x="849" y="277" width="3" height="1.6" fill="#d4d4d4" fill-opacity="0.44"/>
<rect x="852" y="277" width="1" height="1.6" fill="#d4d4d4" fill-opacity="0.26"/>
<rect x="853" y="277" width="8" height="1.6" fill="#d4d4d4" fill-opacity="0.44"/>
<rect x="861" y="277" width="2" height="1.6" fill="#d4d4d4" fill-opacity="0.25"/>
<rect x="863" y="277" width="4" height="1.6" fill="#d4d4d4" fill-opacity="0.44"/>
<rect x="867" y="277" width="1" height="1.6" fill="#d4d4d4" fill-opacity="0.26"/>
<rect x="868" y="277" width="2" height="1.6" fill="#d4d4d4" fill-opacity="0.44"/>
<rect x="870" y="277" width="2" height="1.6" fill="#d4d4d4" fill-opacity="0.25"/>
<rect x="872" y="277" width="6" height="1.6" fill="#d4d4d4" fill-opacity="0.44"/>
<rect x="878" y="277" width="1" height="1.6" fill="#d4d4d4" fill-opacity="0.40"/>
<rect x="879" y="277" width="1" height="1.6" fill="#ce9178" fill-opacity="0.25"/>
<rect x="880" y="277" width="8" height="1.6" fill="#ce9178" fill-opacity="0.44"/>
<rect x="888" y="277" width="1" height="1.6" fill="#ce9178" fill-opacity="0.25"/>
<rect x="889" y="277" width="1" height="1.6" fill="#d4d4d4" fill-opacity="0.25"/>
<rect x="891" y="277" width="4" height="1.6" fill="#569cd6" fill-opacity="0.44"/>
<rect x="895" y="277" width="1" height="1.6" fill="#d4d4d4" fill-opacity="0.40"/>
<rect x="896" y="277" width="1" height="1.6" fill="#d4d4d4" fill-opacity="0.25"/>
<rect x="838" y="279" width="7" height="1.6" fill="#569cd6" fill-opacity="0.44"/>
<rect x="846" y="279" width="5" height="1.6" fill="#569cd6" fill-opacity="0.44"/>
<rect x="840" y="281" width="2" height="1.6" fill="#d4d4d4" fill-opacity="0.40"/>
<rect x="842" y="281" width="7" height="1.6" fill="#d4d4d4" fill-opacity="0.44"/>
<rect x="850" y="281" width="3" height="1.6" fill="#d4d4d4" fill-opacity="0.44"/>
<rect x="853" y="281" width="1" height="1.6" fill="#d4d4d4" fill-opacity="0.25"/>
<rect x="854" y="281" width="3" height="1.6" fill="#d4d4d4" fill-opacity="0.44"/>
<rect x="857" y="281" width="1" height="1.6" fill="#d4d4d4" fill-opacity="0.26"/>
<rect x="858" y="281" width="5" height="1.6" fill="#d4d4d4" fill-opacity="0.44"/>
<rect x="864" y="281" width="3" height="1.6" fill="#d4d4d4" fill-opacity="0.44"/>
<rect x="868" y="281" width="3" height="1.6" fill="#d4d4d4" fill-opacity="0.44"/>
<rect x="871" y="281" width="1" height="1.6" fill="#d4d4d4" fill-opacity="0.25"/>
<rect x="872" y="281" width="3" height="1.6" fill="#d4d4d4" fill-opacity="0.44"/>
<rect x="875" y="281" width="1" height="1.6" fill="#d4d4d4" fill-opacity="0.26"/>
<rect x="876" y="281" width="6" height="1.6" fill="#d4d4d4" fill-opacity="0.44"/>
<rect x="883" y="281" width="3" height="1.6" fill="#d4d4d4" fill-opacity="0.26"/>
<rect x="887" y="281" width="6" height="1.6" fill="#4fa6e8" fill-opacity="0.44"/>
<rect x="893" y="281" width="1" height="1.6" fill="#d4d4d4" fill-opacity="0.40"/>
<rect x="894" y="281" width="1" height="1.6" fill="#d4d4d4" fill-opacity="0.25"/>
<rect x="840" y="283" width="2" height="1.6" fill="#6a9955" fill-opacity="0.40"/>
<rect x="843" y="283" width="5" height="1.6" fill="#6a9955" fill-opacity="0.44"/>
<rect x="849" y="283" width="11" height="1.6" fill="#6a9955" fill-opacity="0.44"/>
<rect x="861" y="283" width="9" height="1.6" fill="#6a9955" fill-opacity="0.44"/>
<rect x="840" y="285" width="4" height="1.6" fill="#569cd6" fill-opacity="0.44"/>
<rect x="844" y="285" width="1" height="1.6" fill="#d4d4d4" fill-opacity="0.25"/>
<rect x="845" y="285" width="1" height="1.6" fill="#d4d4d4" fill-opacity="0.40"/>
<rect x="846" y="285" width="5" height="1.6" fill="#d4d4d4" fill-opacity="0.44"/>
<rect x="851" y="285" width="1" height="1.6" fill="#d4d4d4" fill-opacity="0.26"/>
<rect x="852" y="285" width="2" height="1.6" fill="#d4d4d4" fill-opacity="0.44"/>
<rect x="854" y="285" width="1" height="1.6" fill="#d4d4d4" fill-opacity="0.40"/>
<rect x="855" y="285" width="8" height="1.6" fill="#d4d4d4" fill-opacity="0.44"/>
<rect x="863" y="285" width="1" height="1.6" fill="#d4d4d4" fill-opacity="0.25"/>
<rect x="865" y="285" width="1" height="1.6" fill="#ce9178" fill-opacity="0.25"/>
<rect x="866" y="285" width="3" height="1.6" fill="#ce9178" fill-opacity="0.44"/>
<rect x="870" y="285" width="6" height="1.6" fill="#ce9178" fill-opacity="0.44"/>
<rect x="877" y="285" width="7" height="1.6" fill="#ce9178" fill-opacity="0.44"/>
<rect x="884" y="285" width="1" height="1.6" fill="#ce9178" fill-opacity="0.25"/>
<rect x="885" y="285" width="2" height="1.6" fill="#d4d4d4" fill-opacity="0.40"/>
<rect x="887" y="285" width="1" height="1.6" fill="#d4d4d4" fill-opacity="0.25"/>
<rect x="840" y="287" width="8" height="1.6" fill="#d4d4d4" fill-opacity="0.44"/>
<rect x="848" y="287" width="1" height="1.6" fill="#d4d4d4" fill-opacity="0.25"/>
<rect x="849" y="287" width="7" height="1.6" fill="#d4d4d4" fill-opacity="0.44"/>
<rect x="857" y="287" width="1" height="1.6" fill="#d4d4d4" fill-opacity="0.26"/>
<rect x="859" y="287" width="3" height="1.6" fill="#d4d4d4" fill-opacity="0.44"/>
<rect x="862" y="287" width="1" height="1.6" fill="#d4d4d4" fill-opacity="0.25"/>
<rect x="863" y="287" width="3" height="1.6" fill="#d4d4d4" fill-opacity="0.44"/>
<rect x="866" y="287" width="1" height="1.6" fill="#d4d4d4" fill-opacity="0.26"/>
<rect x="867" y="287" width="5" height="1.6" fill="#d4d4d4" fill-opacity="0.44"/>
<rect x="872" y="287" width="1" height="1.6" fill="#d4d4d4" fill-opacity="0.25"/>
<rect x="840" y="289" width="8" height="1.6" fill="#d4d4d4" fill-opacity="0.44"/>
<rect x="848" y="289" width="1" height="1.6" fill="#d4d4d4" fill-opacity="0.25"/>
<rect x="849" y="289" width="9" height="1.6" fill="#d4d4d4" fill-opacity="0.44"/>
<rect x="859" y="289" width="1" height="1.6" fill="#d4d4d4" fill-opacity="0.26"/>
<rect x="861" y="289" width="3" height="1.6" fill="#d4d4d4" fill-opacity="0.44"/>
<rect x="864" y="289" width="1" height="1.6" fill="#d4d4d4" fill-opacity="0.26"/>
<rect x="865" y="289" width="9" height="1.6" fill="#d4d4d4" fill-opacity="0.44"/>
<rect x="874" y="289" width="1" height="1.6" fill="#d4d4d4" fill-opacity="0.25"/>
<rect x="875" y="289" width="1" height="1.6" fill="#d4d4d4" fill-opacity="0.40"/>
<rect x="876" y="289" width="3" height="1.6" fill="#d4d4d4" fill-opacity="0.44"/>
<rect x="879" y="289" width="1" height="1.6" fill="#d4d4d4" fill-opacity="0.25"/>
<rect x="880" y="289" width="3" height="1.6" fill="#d4d4d4" fill-opacity="0.44"/>
<rect x="883" y="289" width="1" height="1.6" fill="#d4d4d4" fill-opacity="0.26"/>
<rect x="884" y="289" width="6" height="1.6" fill="#d4d4d4" fill-opacity="0.44"/>
<rect x="890" y="289" width="1" height="1.6" fill="#d4d4d4" fill-opacity="0.40"/>
<rect x="891" y="289" width="1" height="1.6" fill="#d4d4d4" fill-opacity="0.25"/>
<rect x="840" y="291" width="8" height="1.6" fill="#d4d4d4" fill-opacity="0.44"/>
<rect x="848" y="291" width="1" height="1.6" fill="#d4d4d4" fill-opacity="0.25"/>
<rect x="849" y="291" width="5" height="1.6" fill="#d4d4d4" fill-opacity="0.44"/>
<rect x="855" y="291" width="1" height="1.6" fill="#d4d4d4" fill-opacity="0.26"/>
<rect x="857" y="291" width="3" height="1.6" fill="#d4d4d4" fill-opacity="0.44"/>
<rect x="860" y="291" width="1" height="1.6" fill="#d4d4d4" fill-opacity="0.26"/>
<rect x="861" y="291" width="8" height="1.6" fill="#d4d4d4" fill-opacity="0.44"/>
<rect x="869" y="291" width="1" height="1.6" fill="#d4d4d4" fill-opacity="0.26"/>
<rect x="870" y="291" width="4" height="1.6" fill="#d4d4d4" fill-opacity="0.44"/>
<rect x="874" y="291" width="1" height="1.6" fill="#d4d4d4" fill-opacity="0.25"/>
<rect x="875" y="291" width="1" height="1.6" fill="#d4d4d4" fill-opacity="0.40"/>
<rect x="876" y="291" width="1" height="1.6" fill="#d4d4d4" fill-opacity="0.44"/>
<rect x="877" y="291" width="1" height="1.6" fill="#d4d4d4" fill-opacity="0.40"/>
<rect x="878" y="291" width="1" height="1.6" fill="#d4d4d4" fill-opacity="0.25"/>
<rect x="881" y="291" width="2" height="1.6" fill="#6a9955" fill-opacity="0.40"/>
<rect x="883" y="291" width="3" height="1.6" fill="#6a9955" fill-opacity="0.44"/>
<rect x="887" y="291" width="4" height="1.6" fill="#6a9955" fill-opacity="0.44"/>
<rect x="892" y="291" width="1" height="1.6" fill="#6a9955" fill-opacity="0.26"/>
<rect x="894" y="291" width="5" height="1.6" fill="#6a9955" fill-opacity="0.44"/>
<rect x="900" y="291" width="6" height="1.6" fill="#6a9955" fill-opacity="0.44"/>
<rect x="907" y="291" width="5" height="1.6" fill="#6a9955" fill-opacity="0.44"/>
<rect x="840" y="293" width="8" height="1.6" fill="#d4d4d4" fill-opacity="0.44"/>
<rect x="848" y="293" width="1" height="1.6" fill="#d4d4d4" fill-opacity="0.25"/>
<rect x="849" y="293" width="5" height="1.6" fill="#d4d4d4" fill-opacity="0.44"/>
<rect x="855" y="293" width="1" height="1.6" fill="#d4d4d4" fill-opacity="0.26"/>
<rect x="857" y="293" width="3" height="1.6" fill="#d4d4d4" fill-opacity="0.44"/>
<rect x="860" y="293" width="1" height="1.6" fill="#d4d4d4" fill-opacity="0.26"/>
<rect x="861" y="293" width="5" height="1.6" fill="#d4d4d4" fill-opacity="0.44"/>
<rect x="866" y="293" width="1" height="1.6" fill="#d4d4d4" fill-opacity="0.26"/>
<rect x="867" y="293" width="4" height="1.6" fill="#d4d4d4" fill-opacity="0.44"/>
<rect x="871" y="293" width="1" height="1.6" fill="#d4d4d4" fill-opacity="0.25"/>
<rect x="872" y="293" width="1" height="1.6" fill="#d4d4d4" fill-opacity="0.40"/>
<rect x="873" y="293" width="1" height="1.6" fill="#d4d4d4" fill-opacity="0.44"/>
<rect x="874" y="293" width="1" height="1.6" fill="#d4d4d4" fill-opacity="0.40"/>
<rect x="875" y="293" width="1" height="1.6" fill="#d4d4d4" fill-opacity="0.25"/>
<rect x="881" y="293" width="2" height="1.6" fill="#6a9955" fill-opacity="0.40"/>
<rect x="883" y="293" width="3" height="1.6" fill="#6a9955" fill-opacity="0.44"/>
<rect x="887" y="293" width="4" height="1.6" fill="#6a9955" fill-opacity="0.44"/>
<rect x="892" y="293" width="1" height="1.6" fill="#6a9955" fill-opacity="0.26"/>
<rect x="894" y="293" width="5" height="1.6" fill="#6a9955" fill-opacity="0.44"/>
<rect x="900" y="293" width="6" height="1.6" fill="#6a9955" fill-opacity="0.44"/>
<rect x="907" y="293" width="5" height="1.6" fill="#6a9955" fill-opacity="0.44"/>
<rect x="840" y="295" width="8" height="1.6" fill="#d4d4d4" fill-opacity="0.44"/>
<rect x="848" y="295" width="1" height="1.6" fill="#d4d4d4" fill-opacity="0.25"/>
<rect x="849" y="295" width="4" height="1.6" fill="#d4d4d4" fill-opacity="0.44"/>
<rect x="854" y="295" width="1" height="1.6" fill="#d4d4d4" fill-opacity="0.26"/>
<rect x="856" y="295" width="1" height="1.6" fill="#d4d4d4" fill-opacity="0.44"/>
<rect x="857" y="295" width="1" height="1.6" fill="#d4d4d4" fill-opacity="0.25"/>
<rect x="860" y="295" width="8" height="1.6" fill="#d4d4d4" fill-opacity="0.44"/>
<rect x="868" y="295" width="1" height="1.6" fill="#d4d4d4" fill-opacity="0.25"/>
<rect x="869" y="295" width="4" height="1.6" fill="#d4d4d4" fill-opacity="0.44"/>
<rect x="874" y="295" width="1" height="1.6" fill="#d4d4d4" fill-opacity="0.26"/>
<rect x="876" y="295" width="1" height="1.6" fill="#d4d4d4" fill-opacity="0.44"/>
<rect x="877" y="295" width="1" height="1.6" fill="#d4d4d4" fill-opacity="0.25"/>
<rect x="880" y="295" width="8" height="1.6" fill="#d4d4d4" fill-opacity="0.44"/>
<rect x="888" y="295" width="1" height="1.6" fill="#d4d4d4" fill-opacity="0.25"/>
<rect x="889" y="295" width="4" height="1.6" fill="#d4d4d4" fill-opacity="0.44"/>
<rect x="894" y="295" width="1" height="1.6" fill="#d4d4d4" fill-opacity="0.26"/>
<rect x="896" y="295" width="1" height="1.6" fill="#d4d4d4" fill-opacity="0.44"/>
<rect x="897" y="295" width="1" height="1.6" fill="#d4d4d4" fill-opacity="0.25"/>
<rect x="840" y="297" width="2" height="1.6" fill="#6a9955" fill-opacity="0.40"/>
<rect x="843" y="297" width="4" height="1.6" fill="#6a9955" fill-opacity="0.44"/>
<rect x="848" y="297" width="3" height="1.6" fill="#6a9955" fill-opacity="0.44"/>
<rect x="852" y="297" width="3" height="1.6" fill="#6a9955" fill-opacity="0.44"/>
<rect x="856" y="297" width="4" height="1.6" fill="#6a9955" fill-opacity="0.44"/>
<rect x="861" y="297" width="5" height="1.6" fill="#6a9955" fill-opacity="0.44"/>
<rect x="867" y="297" width="4" height="1.6" fill="#6a9955" fill-opacity="0.44"/>
<rect x="840" y="299" width="2" height="1.6" fill="#569cd6" fill-opacity="0.44"/>
<rect x="843" y="299" width="1" height="1.6" fill="#d4d4d4" fill-opacity="0.40"/>
<rect x="844" y="299" width="3" height="1.6" fill="#d4d4d4" fill-opacity="0.44"/>
<rect x="847" y="299" width="1" height="1.6" fill="#d4d4d4" fill-opacity="0.25"/>
<rect x="848" y="299" width="3" height="1.6" fill="#d4d4d4" fill-opacity="0.44"/>
<rect x="851" y="299" width="1" height="1.6" fill="#d4d4d4" fill-opacity="0.26"/>
<rect x="852" y="299" width="6" height="1.6" fill="#d4d4d4" fill-opacity="0.44"/>
<rect x="859" y="299" width="2" height="1.6" fill="#d4d4d4" fill-opacity="0.26"/>
<rect x="862" y="299" width="5" height="1.6" fill="#569cd6" fill-opacity="0.44"/>
<rect x="867" y="299" width="1" height="1.6" fill="#d4d4d4" fill-opacity="0.40"/>
<rect x="842" y="301" width="8" height="1.6" fill="#d4d4d4" fill-opacity="0.44"/>
<rect x="850" y="301" width="1" height="1.6" fill="#d4d4d4" fill-opacity="0.25"/>
<rect x="851" y="301" width="4" height="1.6" fill="#d4d4d4" fill-opacity="0.44"/>
<rect x="856" y="301" width="1" height="1.6" fill="#d4d4d4" fill-opacity="0.26"/>
<rect x="858" y="301" width="3" height="1.6" fill="#d4d4d4" fill-opacity="0.44"/>
<rect x="861" y="301" width="1" height="1.6" fill="#d4d4d4" fill-opacity="0.25"/>
<rect x="862" y="301" width="3" height="1.6" fill="#d4d4d4" fill-opacity="0.44"/>
<rect x="865" y="301" width="1" height="1.6" fill="#d4d4d4" fill-opacity="0.26"/>
<rect x="866" y="301" width="6" height="1.6" fill="#d4d4d4" fill-opacity="0.44"/>
<rect x="872" y="301" width="1" height="1.6" fill="#d4d4d4" fill-opacity="0.25"/>
<rect x="840" y="303" width="4" height="1.6" fill="#569cd6" fill-opacity="0.44"/>
<rect x="842" y="305" width="8" height="1.6" fill="#d4d4d4" fill-opacity="0.44"/>
<rect x="850" y="305" width="1" height="1.6" fill="#d4d4d4" fill-opacity="0.25"/>
<rect x="851" y="305" width="4" height="1.6" fill="#d4d4d4" fill-opacity="0.44"/>
<rect x="856" y="305" width="1" height="1.6" fill="#d4d4d4" fill-opacity="0.26"/>
<rect x="858" y="305" width="3" height="1.6" fill="#d4d4d4" fill-opacity="0.44"/>
<rect x="861" y="305" width="1" height="1.6" fill="#d4d4d4" fill-opacity="0.25"/>
<rect x="862" y="305" width="3" height="1.6" fill="#d4d4d4" fill-opacity="0.44"/>
<rect x="865" y="305" width="1" height="1.6" fill="#d4d4d4" fill-opacity="0.26"/>
<rect x="866" y="305" width="6" height="1.6" fill="#d4d4d4" fill-opacity="0.44"/>
<rect x="872" y="305" width="1" height="1.6" fill="#d4d4d4" fill-opacity="0.25"/>
<rect x="840" y="309" width="2" height="1.6" fill="#d4d4d4" fill-opacity="0.40"/>
<rect x="842" y="309" width="7" height="1.6" fill="#d4d4d4" fill-opacity="0.44"/>
<rect x="850" y="309" width="3" height="1.6" fill="#d4d4d4" fill-opacity="0.44"/>
<rect x="853" y="309" width="1" height="1.6" fill="#d4d4d4" fill-opacity="0.25"/>
<rect x="854" y="309" width="3" height="1.6" fill="#d4d4d4" fill-opacity="0.44"/>
<rect x="857" y="309" width="1" height="1.6" fill="#d4d4d4" fill-opacity="0.26"/>
<rect x="858" y="309" width="5" height="1.6" fill="#d4d4d4" fill-opacity="0.44"/>
<rect x="864" y="309" width="3" height="1.6" fill="#d4d4d4" fill-opacity="0.44"/>
<rect x="868" y="309" width="3" height="1.6" fill="#d4d4d4" fill-opacity="0.44"/>
<rect x="871" y="309" width="1" height="1.6" fill="#d4d4d4" fill-opacity="0.25"/>
<rect x="872" y="309" width="3" height="1.6" fill="#d4d4d4" fill-opacity="0.44"/>
<rect x="875" y="309" width="1" height="1.6" fill="#d4d4d4" fill-opacity="0.26"/>
<rect x="876" y="309" width="6" height="1.6" fill="#d4d4d4" fill-opacity="0.44"/>
<rect x="883" y="309" width="3" height="1.6" fill="#d4d4d4" fill-opacity="0.26"/>
<rect x="887" y="309" width="1" height="1.6" fill="#d4d4d4" fill-opacity="0.44"/>
<rect x="888" y="309" width="1" height="1.6" fill="#d4d4d4" fill-opacity="0.40"/>
<rect x="889" y="309" width="1" height="1.6" fill="#d4d4d4" fill-opacity="0.25"/>
<rect x="840" y="311" width="8" height="1.6" fill="#d4d4d4" fill-opacity="0.44"/>
<rect x="848" y="311" width="1" height="1.6" fill="#d4d4d4" fill-opacity="0.25"/>
<rect x="849" y="311" width="6" height="1.6" fill="#d4d4d4" fill-opacity="0.44"/>
<rect x="856" y="311" width="1" height="1.6" fill="#d4d4d4" fill-opacity="0.26"/>
<rect x="858" y="311" width="2" height="1.6" fill="#d4d4d4" fill-opacity="0.44"/>
<rect x="860" y="311" width="1" height="1.6" fill="#d4d4d4" fill-opacity="0.25"/>
<rect x="841" y="313" width="3" height="1.6" fill="#d4d4d4" fill-opacity="0.44"/>
<rect x="844" y="313" width="1" height="1.6" fill="#d4d4d4" fill-opacity="0.26"/>
<rect x="845" y="313" width="2" height="1.6" fill="#d4d4d4" fill-opacity="0.44"/>
<rect x="847" y="313" width="1" height="1.6" fill="#d4d4d4" fill-opacity="0.40"/>
<rect x="848" y="313" width="8" height="1.6" fill="#d4d4d4" fill-opacity="0.44"/>
<rect x="856" y="313" width="1" height="1.6" fill="#d4d4d4" fill-opacity="0.25"/>
<rect x="858" y="313" width="1" height="1.6" fill="#d4d4d4" fill-opacity="0.25"/>
<rect x="859" y="313" width="9" height="1.6" fill="#d4d4d4" fill-opacity="0.44"/>
<rect x="868" y="313" width="1" height="1.6" fill="#d4d4d4" fill-opacity="0.25"/>
<rect x="869" y="313" width="1" height="1.6" fill="#d4d4d4" fill-opacity="0.40"/>
<rect x="870" y="313" width="1" height="1.6" fill="#d4d4d4" fill-opacity="0.25"/>
<rect x="841" y="315" width="1" height="1.6" fill="#d4d4d4" fill-opacity="0.25"/>
<rect x="842" y="315" width="3" height="1.6" fill="#d4d4d4" fill-opacity="0.44"/>
<rect x="845" y="315" width="1" height="1.6" fill="#d4d4d4" fill-opacity="0.26"/>
<rect x="846" y="315" width="4" height="1.6" fill="#d4d4d4" fill-opacity="0.44"/>
<rect x="850" y="315" width="1" height="1.6" fill="#d4d4d4" fill-opacity="0.40"/>
<rect x="851" y="315" width="1" height="1.6" fill="#ce9178" fill-opacity="0.25"/>
<rect x="852" y="315" width="8" height="1.6" fill="#ce9178" fill-opacity="0.44"/>
<rect x="861" y="315" width="9" height="1.6" fill="#ce9178" fill-opacity="0.44"/>
<rect x="871" y="315" width="2" height="1.6" fill="#ce9178" fill-opacity="0.25"/>
<rect x="873" y="315" width="1" height="1.6" fill="#d4d4d4" fill-opacity="0.25"/>
<rect x="875" y="315" width="3" height="1.6" fill="#d4d4d4" fill-opacity="0.44"/>
<rect x="878" y="315" width="1" height="1.6" fill="#d4d4d4" fill-opacity="0.40"/>
<rect x="842" y="317" width="8" height="1.6" fill="#d4d4d4" fill-opacity="0.44"/>
<rect x="850" y="317" width="1" height="1.6" fill="#d4d4d4" fill-opacity="0.25"/>
<rect x="851" y="317" width="6" height="1.6" fill="#d4d4d4" fill-opacity="0.44"/>
<rect x="857" y="317" width="3" height="1.6" fill="#d4d4d4" fill-opacity="0.40"/>
<rect x="860" y="317" width="1" height="1.6" fill="#d4d4d4" fill-opacity="0.25"/>
<rect x="862" y="317" width="3" height="1.6" fill="#d4d4d4" fill-opacity="0.44"/>
<rect x="865" y="317" width="1" height="1.6" fill="#d4d4d4" fill-opacity="0.26"/>
<rect x="866" y="317" width="4" height="1.6" fill="#d4d4d4" fill-opacity="0.44"/>
<rect x="870" y="317" width="1" height="1.6" fill="#d4d4d4" fill-opacity="0.40"/>
<rect x="840" y="319" width="2" height="1.6" fill="#569cd6" fill-opacity="0.44"/>
<rect x="843" y="319" width="1" height="1.6" fill="#d4d4d4" fill-opacity="0.40"/>
<rect x="844" y="319" width="6" height="1.6" fill="#d4d4d4" fill-opacity="0.44"/>
<rect x="850" y="319" width="1" height="1.6" fill="#d4d4d4" fill-opacity="0.26"/>
<rect x="851" y="319" width="6" height="1.6" fill="#d4d4d4" fill-opacity="0.44"/>
<rect x="857" y="319" width="1" height="1.6" fill="#d4d4d4" fill-opacity="0.40"/>
<rect x="841" y="321" width="7" height="1.6" fill="#d4d4d4" fill-opacity="0.44"/>
<rect x="848" y="321" width="1" height="1.6" fill="#d4d4d4" fill-opacity="0.26"/>
<rect x="849" y="321" width="6" height="1.6" fill="#d4d4d4" fill-opacity="0.44"/>
<rect x="855" y="321" width="2" height="1.6" fill="#d4d4d4" fill-opacity="0.40"/>
<rect x="857" y="321" width="1" height="1.6" fill="#d4d4d4" fill-opacity="0.25"/>
<rect x="840" y="323" width="2" height="1.6" fill="#569cd6" fill-opacity="0.44"/>
<rect x="843" y="323" width="1" height="1.6" fill="#d4d4d4" fill-opacity="0.40"/>
<rect x="844" y="323" width="8" height="1.6" fill="#d4d4d4" fill-opacity="0.44"/>
<rect x="852" y="323" width="1" height="1.6" fill="#d4d4d4" fill-opacity="0.26"/>
<rect x="853" y="323" width="6" height="1.6" fill="#d4d4d4" fill-opacity="0.44"/>
<rect x="859" y="323" width="1" height="1.6" fill="#d4d4d4" fill-opacity="0.40"/>
<rect x="841" y="325" width="7" height="1.6" fill="#d4d4d4" fill-opacity="0.44"/>
<rect x="848" y="325" width="1" height="1.6" fill="#d4d4d4" fill-opacity="0.26"/>
<rect x="849" y="325" width="8" height="1.6" fill="#d4d4d4" fill-opacity="0.44"/>
<rect x="857" y="325" width="2" height="1.6" fill="#d4d4d4" fill-opacity="0.40"/>
<rect x="859" y="325" width="1" height="1.6" fill="#d4d4d4" fill-opacity="0.25"/>
<rect x="840" y="327" width="2" height="1.6" fill="#6a9955" fill-opacity="0.40"/>
<rect x="843" y="327" width="4" height="1.6" fill="#6a9955" fill-opacity="0.44"/>
<rect x="848" y="327" width="8" height="1.6" fill="#6a9955" fill-opacity="0.44"/>
<rect x="857" y="327" width="2" height="1.6" fill="#6a9955" fill-opacity="0.44"/>
<rect x="860" y="327" width="10" height="1.6" fill="#6a9955" fill-opacity="0.44"/>
<rect x="871" y="327" width="3" height="1.6" fill="#6a9955" fill-opacity="0.44"/>
<rect x="875" y="327" width="3" height="1.6" fill="#6a9955" fill-opacity="0.44"/>
<rect x="879" y="327" width="5" height="1.6" fill="#6a9955" fill-opacity="0.44"/>
<rect x="884" y="327" width="2" height="1.6" fill="#6a9955" fill-opacity="0.40"/>
<rect x="840" y="329" width="4" height="1.6" fill="#d4d4d4" fill-opacity="0.44"/>
<rect x="844" y="329" width="1" height="1.6" fill="#d4d4d4" fill-opacity="0.26"/>
<rect x="845" y="329" width="9" height="1.6" fill="#d4d4d4" fill-opacity="0.44"/>
<rect x="854" y="329" width="1" height="1.6" fill="#d4d4d4" fill-opacity="0.26"/>
<rect x="855" y="329" width="4" height="1.6" fill="#d4d4d4" fill-opacity="0.44"/>
<rect x="859" y="329" width="1" height="1.6" fill="#d4d4d4" fill-opacity="0.25"/>
<rect x="860" y="329" width="5" height="1.6" fill="#d4d4d4" fill-opacity="0.44"/>
<rect x="865" y="329" width="1" height="1.6" fill="#d4d4d4" fill-opacity="0.40"/>
<rect x="866" y="329" width="8" height="1.6" fill="#d4d4d4" fill-opacity="0.44"/>
<rect x="874" y="329" width="1" height="1.6" fill="#d4d4d4" fill-opacity="0.40"/>
<rect x="875" y="329" width="1" height="1.6" fill="#d4d4d4" fill-opacity="0.25"/>
<rect x="840" y="331" width="3" height="1.6" fill="#d4d4d4" fill-opacity="0.44"/>
<rect x="843" y="331" width="1" height="1.6" fill="#d4d4d4" fill-opacity="0.26"/>
<rect x="844" y="331" width="3" height="1.6" fill="#d4d4d4" fill-opacity="0.44"/>
<rect x="847" y="331" width="2" height="1.6" fill="#d4d4d4" fill-opacity="0.40"/>
<rect x="849" y="331" width="1" height="1.6" fill="#d4d4d4" fill-opacity="0.25"/>
<rect x="852" y="331" width="1" height="1.6" fill="#d4d4d4" fill-opacity="0.26"/>
<rect x="853" y="331" width="1" height="1.6" fill="#d4d4d4" fill-opacity="0.40"/>
<rect x="855" y="331" width="5" height="1.6" fill="#d4d4d4" fill-opacity="0.44"/>
<rect x="860" y="331" width="1" height="1.6" fill="#d4d4d4" fill-opacity="0.25"/>
<rect x="840" y="333" width="1" height="1.6" fill="#d4d4d4" fill-opacity="0.26"/>
<rect x="841" y="333" width="1" height="1.6" fill="#d4d4d4" fill-opacity="0.40"/>
<rect x="843" y="333" width="5" height="1.6" fill="#d4d4d4" fill-opacity="0.44"/>
<rect x="848" y="333" width="1" height="1.6" fill="#d4d4d4" fill-opacity="0.25"/>
<rect x="838" y="335" width="3" height="1.6" fill="#569cd6" fill-opacity="0.44"/>
<rect x="836" y="337" width="7" height="1.6" fill="#569cd6" fill-opacity="0.44"/>
<rect x="844" y="337" width="1" height="1.6" fill="#d4d4d4" fill-opacity="0.25"/>
<rect x="846" y="337" width="7" height="1.6" fill="#d4d4d4" fill-opacity="0.44"/>
<rect x="853" y="337" width="1" height="1.6" fill="#d4d4d4" fill-opacity="0.26"/>
<rect x="854" y="337" width="8" height="1.6" fill="#d4d4d4" fill-opacity="0.44"/>
<rect x="836" y="341" width="76" height="1.6" fill="#6a9955" fill-opacity="0.40"/>
<rect x="837" y="343" width="3" height="1.6" fill="#6a9955" fill-opacity="0.44"/>
<rect x="840" y="343" width="1" height="1.6" fill="#6a9955" fill-opacity="0.26"/>
<rect x="841" y="343" width="4" height="1.6" fill="#f44747" fill-opacity="0.44"/>
<rect x="846" y="343" width="1" height="1.6" fill="#6a9955" fill-opacity="0.25"/>
<rect x="848" y="343" width="8" height="1.6" fill="#6a9955" fill-opacity="0.44"/>
<rect x="857" y="343" width="1" height="1.6" fill="#6a9955" fill-opacity="0.25"/>
<rect x="859" y="343" width="6" height="1.6" fill="#6a9955" fill-opacity="0.44"/>
<rect x="866" y="343" width="7" height="1.6" fill="#6a9955" fill-opacity="0.44"/>
<rect x="874" y="343" width="1" height="1.6" fill="#6a9955" fill-opacity="0.25"/>
<rect x="876" y="343" width="8" height="1.6" fill="#6a9955" fill-opacity="0.44"/>
<rect x="885" y="343" width="6" height="1.6" fill="#6a9955" fill-opacity="0.44"/>
<rect x="837" y="345" width="73" height="1.6" fill="#6a9955" fill-opacity="0.26"/>
<rect x="837" y="347" width="3" height="1.6" fill="#6a9955" fill-opacity="0.44"/>
<rect x="841" y="347" width="8" height="1.6" fill="#6a9955" fill-opacity="0.44"/>
<rect x="850" y="347" width="6" height="1.6" fill="#6a9955" fill-opacity="0.44"/>
<rect x="857" y="347" width="6" height="1.6" fill="#6a9955" fill-opacity="0.44"/>
<rect x="864" y="347" width="3" height="1.6" fill="#6a9955" fill-opacity="0.44"/>
<rect x="868" y="347" width="7" height="1.6" fill="#6a9955" fill-opacity="0.44"/>
<rect x="875" y="347" width="1" height="1.6" fill="#6a9955" fill-opacity="0.26"/>
<rect x="876" y="347" width="6" height="1.6" fill="#6a9955" fill-opacity="0.44"/>
<rect x="882" y="347" width="2" height="1.6" fill="#6a9955" fill-opacity="0.40"/>
<rect x="885" y="347" width="6" height="1.6" fill="#6a9955" fill-opacity="0.44"/>
<rect x="891" y="347" width="1" height="1.6" fill="#6a9955" fill-opacity="0.25"/>
<rect x="837" y="349" width="76" height="1.6" fill="#6a9955" fill-opacity="0.40"/>
<rect x="836" y="353" width="2" height="1.6" fill="#6a9955" fill-opacity="0.40"/>
<rect x="839" y="353" width="3" height="1.6" fill="#6a9955" fill-opacity="0.44"/>
<rect x="843" y="353" width="7" height="1.6" fill="#6a9955" fill-opacity="0.44"/>
<rect x="850" y="353" width="1" height="1.6" fill="#6a9955" fill-opacity="0.26"/>
<rect x="851" y="353" width="6" height="1.6" fill="#6a9955" fill-opacity="0.44"/>
<rect x="857" y="353" width="2" height="1.6" fill="#6a9955" fill-opacity="0.40"/>
<rect x="836" y="355" width="8" height="1.6" fill="#569cd6" fill-opacity="0.44"/>
<rect x="845" y="355" width="4" height="1.6" fill="#569cd6" fill-opacity="0.44"/>
<rect x="850" y="355" width="3" height="1.6" fill="#d4d4d4" fill-opacity="0.44"/>
<rect x="853" y="355" width="1" height="1.6" fill="#d4d4d4" fill-opacity="0.26"/>
<rect x="854" y="355" width="6" height="1.6" fill="#d4d4d4" fill-opacity="0.44"/>
<rect x="860" y="355" width="1" height="1.6" fill="#d4d4d4" fill-opacity="0.26"/>
<rect x="861" y="355" width="7" height="1.6" fill="#d4d4d4" fill-opacity="0.44"/>
<rect x="868" y="355" width="2" height="1.6" fill="#d4d4d4" fill-opacity="0.25"/>
<rect x="870" y="355" width="7" height="1.6" fill="#d4d4d4" fill-opacity="0.44"/>
<rect x="877" y="355" width="1" height="1.6" fill="#d4d4d4" fill-opacity="0.26"/>
<rect x="878" y="355" width="6" height="1.6" fill="#d4d4d4" fill-opacity="0.44"/>
<rect x="884" y="355" width="2" height="1.6" fill="#d4d4d4" fill-opacity="0.40"/>
<rect x="886" y="355" width="1" height="1.6" fill="#d4d4d4" fill-opacity="0.25"/>
<rect x="836" y="357" width="2" height="1.6" fill="#6a9955" fill-opacity="0.40"/>
<rect x="839" y="357" width="3" height="1.6" fill="#6a9955" fill-opacity="0.44"/>
<rect x="843" y="357" width="6" height="1.6" fill="#6a9955" fill-opacity="0.44"/>
<rect x="850" y="357" width="4" height="1.6" fill="#6a9955" fill-opacity="0.44"/>
<rect x="836" y="359" width="11" height="1.6" fill="#569cd6" fill-opacity="0.44"/>
<rect x="848" y="359" width="1" height="1.6" fill="#d4d4d4" fill-opacity="0.25"/>
<rect x="850" y="359" width="7" height="1.6" fill="#d4d4d4" fill-opacity="0.44"/>
<rect x="857" y="359" width="1" height="1.6" fill="#d4d4d4" fill-opacity="0.26"/>
<rect x="858" y="359" width="6" height="1.6" fill="#d4d4d4" fill-opacity="0.44"/>
<rect x="836" y="363" width="76" height="1.6" fill="#6a9955" fill-opacity="0.40"/>
<rect x="837" y="365" width="3" height="1.6" fill="#6a9955" fill-opacity="0.44"/>
<rect x="840" y="365" width="1" height="1.6" fill="#6a9955" fill-opacity="0.26"/>
<rect x="841" y="365" width="4" height="1.6" fill="#f44747" fill-opacity="0.44"/>
<rect x="846" y="365" width="1" height="1.6" fill="#6a9955" fill-opacity="0.25"/>
<rect x="848" y="365" width="8" height="1.6" fill="#6a9955" fill-opacity="0.44"/>
<rect x="857" y="365" width="1" height="1.6" fill="#6a9955" fill-opacity="0.25"/>
<rect x="859" y="365" width="6" height="1.6" fill="#6a9955" fill-opacity="0.44"/>
<rect x="866" y="365" width="7" height="1.6" fill="#6a9955" fill-opacity="0.44"/>
<rect x="874" y="365" width="1" height="1.6" fill="#6a9955" fill-opacity="0.25"/>
<rect x="876" y="365" width="8" height="1.6" fill="#6a9955" fill-opacity="0.44"/>
<rect x="837" y="367" width="73" height="1.6" fill="#6a9955" fill-opacity="0.26"/>
<rect x="837" y="369" width="6" height="1.6" fill="#6a9955" fill-opacity="0.44"/>
<rect x="844" y="369" width="3" height="1.6" fill="#6a9955" fill-opacity="0.44"/>
<rect x="848" y="369" width="6" height="1.6" fill="#6a9955" fill-opacity="0.44"/>
<rect x="854" y="369" width="1" height="1.6" fill="#6a9955" fill-opacity="0.26"/>
<rect x="855" y="369" width="2" height="1.6" fill="#6a9955" fill-opacity="0.44"/>
<rect x="858" y="369" width="8" height="1.6" fill="#6a9955" fill-opacity="0.44"/>
<rect x="867" y="369" width="5" height="1.6" fill="#6a9955" fill-opacity="0.44"/>
<rect x="873" y="369" width="2" height="1.6" fill="#6a9955" fill-opacity="0.44"/>
<rect x="876" y="369" width="5" height="1.6" fill="#6a9955" fill-opacity="0.44"/>
<rect x="882" y="369" width="4" height="1.6" fill="#6a9955" fill-opacity="0.44"/>
<rect x="887" y="369" width="8" height="1.6" fill="#6a9955" fill-opacity="0.44"/>
<rect x="895" y="369" width="1" height="1.6" fill="#6a9955" fill-opacity="0.25"/>
<rect x="837" y="371" width="3" height="1.6" fill="#6a9955" fill-opacity="0.44"/>
<rect x="841" y="371" width="3" height="1.6" fill="#6a9955" fill-opacity="0.44"/>
<rect x="845" y="371" width="8" height="1.6" fill="#6a9955" fill-opacity="0.44"/>
<rect x="854" y="371" width="5" height="1.6" fill="#6a9955" fill-opacity="0.44"/>
<rect x="860" y="371" width="2" height="1.6" fill="#6a9955" fill-opacity="0.44"/>
<rect x="863" y="371" width="7" height="1.6" fill="#6a9955" fill-opacity="0.44"/>
<rect x="871" y="371" width="2" height="1.6" fill="#6a9955" fill-opacity="0.44"/>
<rect x="874" y="371" width="3" height="1.6" fill="#6a9955" fill-opacity="0.44"/>
<rect x="878" y="371" width="5" height="1.6" fill="#6a9955" fill-opacity="0.44"/>
<rect x="884" y="371" width="2" height="1.6" fill="#6a9955" fill-opacity="0.44"/>
<rect x="887" y="371" width="6" height="1.6" fill="#6a9955" fill-opacity="0.44"/>
<rect x="893" y="371" width="1" height="1.6" fill="#6a9955" fill-opacity="0.25"/>
<rect x="837" y="373" width="3" height="1.6" fill="#6a9955" fill-opacity="0.25"/>
<rect x="837" y="375" width="76" height="1.6" fill="#6a9955" fill-opacity="0.40"/>
<rect x="836" y="379" width="2" height="1.6" fill="#6a9955" fill-opacity="0.40"/>
<rect x="839" y="379" width="3" height="1.6" fill="#6a9955" fill-opacity="0.44"/>
<rect x="843" y="379" width="7" height="1.6" fill="#6a9955" fill-opacity="0.44"/>
<rect x="850" y="379" width="1" height="1.6" fill="#6a9955" fill-opacity="0.26"/>
<rect x="851" y="379" width="8" height="1.6" fill="#6a9955" fill-opacity="0.44"/>
<rect x="859" y="379" width="2" height="1.6" fill="#6a9955" fill-opacity="0.40"/>
<rect x="836" y="381" width="8" height="1.6" fill="#569cd6" fill-opacity="0.44"/>
<rect x="845" y="381" width="4" height="1.6" fill="#569cd6" fill-opacity="0.44"/>
<rect x="850" y="381" width="3" height="1.6" fill="#d4d4d4" fill-opacity="0.44"/>
<rect x="853" y="381" width="1" height="1.6" fill="#d4d4d4" fill-opacity="0.26"/>
<rect x="854" y="381" width="6" height="1.6" fill="#d4d4d4" fill-opacity="0.44"/>
<rect x="860" y="381" width="1" height="1.6" fill="#d4d4d4" fill-opacity="0.26"/>
<rect x="861" y="381" width="7" height="1.6" fill="#d4d4d4" fill-opacity="0.44"/>
<rect x="868" y="381" width="2" height="1.6" fill="#d4d4d4" fill-opacity="0.25"/>
<rect x="870" y="381" width="7" height="1.6" fill="#d4d4d4" fill-opacity="0.44"/>
<rect x="877" y="381" width="1" height="1.6" fill="#d4d4d4" fill-opacity="0.26"/>
<rect x="878" y="381" width="8" height="1.6" fill="#d4d4d4" fill-opacity="0.44"/>
<rect x="886" y="381" width="2" height="1.6" fill="#d4d4d4" fill-opacity="0.40"/>
<rect x="888" y="381" width="1" height="1.6" fill="#d4d4d4" fill-opacity="0.25"/>
<rect x="838" y="383" width="6" height="1.6" fill="#d4d4d4" fill-opacity="0.44"/>
<rect x="844" y="383" width="1" height="1.6" fill="#d4d4d4" fill-opacity="0.26"/>
<rect x="845" y="383" width="2" height="1.6" fill="#d4d4d4" fill-opacity="0.44"/>
<rect x="847" y="383" width="1" height="1.6" fill="#d4d4d4" fill-opacity="0.25"/>
<rect x="848" y="383" width="6" height="1.6" fill="#d4d4d4" fill-opacity="0.44"/>
<rect x="854" y="383" width="2" height="1.6" fill="#d4d4d4" fill-opacity="0.40"/>
<rect x="856" y="383" width="1" height="1.6" fill="#d4d4d4" fill-opacity="0.25"/>
<rect x="836" y="385" width="11" height="1.6" fill="#569cd6" fill-opacity="0.44"/>
<rect x="848" y="385" width="1" height="1.6" fill="#d4d4d4" fill-opacity="0.25"/>
<rect x="850" y="385" width="7" height="1.6" fill="#d4d4d4" fill-opacity="0.44"/>
<rect x="857" y="385" width="1" height="1.6" fill="#d4d4d4" fill-opacity="0.26"/>
<rect x="858" y="385" width="8" height="1.6" fill="#d4d4d4" fill-opacity="0.44"/>
<rect x="836" y="389" width="2" height="1.6" fill="#6a9955" fill-opacity="0.40"/>
<rect x="839" y="389" width="3" height="1.6" fill="#6a9955" fill-opacity="0.44"/>
<rect x="843" y="389" width="6" height="1.6" fill="#6a9955" fill-opacity="0.44"/>
<rect x="849" y="389" width="2" height="1.6" fill="#6a9955" fill-opacity="0.40"/>
<rect x="852" y="389" width="5" height="1.6" fill="#6a9955" fill-opacity="0.44"/>
<rect x="836" y="391" width="8" height="1.6" fill="#569cd6" fill-opacity="0.44"/>
<rect x="845" y="391" width="4" height="1.6" fill="#569cd6" fill-opacity="0.44"/>
<rect x="850" y="391" width="3" height="1.6" fill="#d4d4d4" fill-opacity="0.44"/>
<rect x="853" y="391" width="1" height="1.6" fill="#d4d4d4" fill-opacity="0.26"/>
<rect x="854" y="391" width="6" height="1.6" fill="#d4d4d4" fill-opacity="0.44"/>
<rect x="860" y="391" width="1" height="1.6" fill="#d4d4d4" fill-opacity="0.26"/>
<rect x="861" y="391" width="7" height="1.6" fill="#d4d4d4" fill-opacity="0.44"/>
<rect x="868" y="391" width="2" height="1.6" fill="#d4d4d4" fill-opacity="0.25"/>
<rect x="870" y="391" width="6" height="1.6" fill="#d4d4d4" fill-opacity="0.44"/>
<rect x="876" y="391" width="2" height="1.6" fill="#d4d4d4" fill-opacity="0.40"/>
<rect x="878" y="391" width="1" height="1.6" fill="#d4d4d4" fill-opacity="0.25"/>
<rect x="838" y="393" width="1" height="1.6" fill="#d4d4d4" fill-opacity="0.25"/>
<rect x="839" y="393" width="3" height="1.6" fill="#d4d4d4" fill-opacity="0.44"/>
<rect x="842" y="393" width="1" height="1.6" fill="#d4d4d4" fill-opacity="0.26"/>
<rect x="843" y="393" width="4" height="1.6" fill="#d4d4d4" fill-opacity="0.44"/>
<rect x="847" y="393" width="1" height="1.6" fill="#d4d4d4" fill-opacity="0.40"/>
<rect x="848" y="393" width="3" height="1.6" fill="#d4d4d4" fill-opacity="0.44"/>
<rect x="851" y="393" width="1" height="1.6" fill="#d4d4d4" fill-opacity="0.26"/>
<rect x="852" y="393" width="4" height="1.6" fill="#d4d4d4" fill-opacity="0.44"/>
<rect x="856" y="393" width="1" height="1.6" fill="#d4d4d4" fill-opacity="0.26"/>
<rect x="857" y="393" width="4" height="1.6" fill="#d4d4d4" fill-opacity="0.44"/>
<rect x="861" y="393" width="2" height="1.6" fill="#d4d4d4" fill-opacity="0.40"/>
<rect x="863" y="393" width="1" height="1.6" fill="#d4d4d4" fill-opacity="0.25"/>
<rect x="840" y="395" width="1" height="1.6" fill="#d4d4d4" fill-opacity="0.40"/>
<rect x="841" y="395" width="8" height="1.6" fill="#d4d4d4" fill-opacity="0.44"/>
<rect x="849" y="395" width="1" height="1.6" fill="#d4d4d4" fill-opacity="0.40"/>
<rect x="850" y="395" width="1" height="1.6" fill="#ce9178" fill-opacity="0.25"/>
<rect x="851" y="395" width="6" height="1.6" fill="#ce9178" fill-opacity="0.44"/>
<rect x="857" y="395" width="1" height="1.6" fill="#ce9178" fill-opacity="0.25"/>
<rect x="859" y="395" width="3" height="1.6" fill="#ce9178" fill-opacity="0.44"/>
<rect x="863" y="395" width="6" height="1.6" fill="#ce9178" fill-opacity="0.44"/>
<rect x="870" y="395" width="7" height="1.6" fill="#ce9178" fill-opacity="0.44"/>
<rect x="878" y="395" width="9" height="1.6" fill="#ce9178" fill-opacity="0.44"/>
<rect x="888" y="395" width="1" height="1.6" fill="#ce9178" fill-opacity="0.40"/>
<rect x="889" y="395" width="2" height="1.6" fill="#ce9178" fill-opacity="0.44"/>
<rect x="892" y="395" width="9" height="1.6" fill="#ce9178" fill-opacity="0.44"/>
<rect x="901" y="395" width="1" height="1.6" fill="#ce9178" fill-opacity="0.25"/>
<rect x="902" y="395" width="1" height="1.6" fill="#d4d4d4" fill-opacity="0.25"/>
<rect x="904" y="395" width="3" height="1.6" fill="#d4d4d4" fill-opacity="0.44"/>
<rect x="907" y="395" width="1" height="1.6" fill="#d4d4d4" fill-opacity="0.26"/>
<rect x="908" y="395" width="3" height="1.6" fill="#d4d4d4" fill-opacity="0.44"/>
<rect x="911" y="395" width="1" height="1.6" fill="#d4d4d4" fill-opacity="0.40"/>
<rect x="912" y="395" width="1" height="1.6" fill="#d4d4d4" fill-opacity="0.25"/>
<rect x="840" y="397" width="3" height="1.6" fill="#d4d4d4" fill-opacity="0.44"/>
<rect x="843" y="397" width="1" height="1.6" fill="#d4d4d4" fill-opacity="0.26"/>
<rect x="844" y="397" width="3" height="1.6" fill="#d4d4d4" fill-opacity="0.44"/>
<rect x="847" y="397" width="1" height="1.6" fill="#d4d4d4" fill-opacity="0.40"/>
<rect x="848" y="397" width="1" height="1.6" fill="#d4d4d4" fill-opacity="0.25"/>
<rect x="836" y="399" width="11" height="1.6" fill="#569cd6" fill-opacity="0.44"/>
<rect x="848" y="399" width="1" height="1.6" fill="#d4d4d4" fill-opacity="0.25"/>
<rect x="850" y="399" width="6" height="1.6" fill="#d4d4d4" fill-opacity="0.44"/>
<rect x="836" y="403" width="1" height="1.6" fill="#d4d4d4" fill-opacity="0.25"/>
<rect x="837" y="403" width="5" height="1.6" fill="#d4d4d4" fill-opacity="0.44"/>
<rect x="843" y="403" width="2" height="1.6" fill="#6a9955" fill-opacity="0.40"/>
<rect x="846" y="403" width="3" height="1.6" fill="#6a9955" fill-opacity="0.44"/>
<rect x="849" y="403" width="1" height="1.6" fill="#6a9955" fill-opacity="0.26"/>
<rect x="850" y="403" width="6" height="1.6" fill="#6a9955" fill-opacity="0.44"/>
<rect x="856" y="403" width="1" height="1.6" fill="#6a9955" fill-opacity="0.26"/>
<rect x="857" y="403" width="7" height="1.6" fill="#6a9955" fill-opacity="0.44"/>
<rect x="864" y="403" width="1" height="1.6" fill="#6a9955" fill-opacity="0.26"/>
<rect x="865" y="403" width="2" height="1.6" fill="#6a9955" fill-opacity="0.44"/>
<rect x="836" y="211" width="78" height="2" fill="#cca700" fill-opacity="0.45"/>
<rect x="836" y="213" width="78" height="2" fill="#cca700" fill-opacity="0.45"/>
<rect x="836" y="231" width="78" height="2" fill="#f14c4c" fill-opacity="0.45"/>
<rect x="836" y="245" width="78" height="2" fill="#f14c4c" fill-opacity="0.45"/>
<rect x="858" y="211" width="9" height="2" fill="#cca700"/>
<rect x="867" y="213" width="13" height="2" fill="#cca700"/>
<rect x="870" y="231" width="13" height="2" fill="#f14c4c"/>
<rect x="894" y="231" width="5" height="2" fill="#cca700"/>
<rect x="861" y="245" width="9" height="2" fill="#f14c4c"/>
<rect x="881" y="245" width="5" height="2" fill="#cca700"/></svg>
<div id="mmshadow"></div>
<div id="tabs"><div id="tab">
<svg style="position:absolute;left:0;top:0" width="228" height="28">
<g fill="#c5c5c5"><rect x="19.5" y="6.8" width="8.6" height="1.2"/><rect x="19.5" y="9.2" width="4.8" height="1.2"/><rect x="19.5" y="11.8" width="8.6" height="1.2"/><rect x="19.5" y="14.6" width="6.4" height="1.2"/></g>
<g stroke="#d8d8d8" stroke-width="1.15"><line x1="209.6" y1="8.0" x2="218.3" y2="15.7"/><line x1="218.3" y1="8.0" x2="209.6" y2="15.7"/></g>
</svg>
<div class="tt" style="left:34.5px;top:4px;color:#f88070;font-size:13.25px">ahb_master_monitor.sv</div>
<div class="tt" style="left:177.2px;top:3.5px;color:#e58a74;font-size:11px;letter-spacing:0.25px">6, M</div>
</div>
<svg style="position:absolute;left:790px;top:0" width="124" height="28">
<g fill="none" stroke="#c5c5c5" stroke-width="1">
<path d="M21.96,7.83 L21.89,5.70 L24.11,5.70 L24.04,7.83 L25.21,8.31 L26.67,6.76 L28.24,8.33 L26.69,9.79 L27.17,10.96 L29.30,10.89 L29.30,13.11 L27.17,13.04 L26.69,14.21 L28.24,15.67 L26.67,17.24 L25.21,15.69 L24.04,16.17 L24.11,18.30 L21.89,18.30 L21.96,16.17 L20.79,15.69 L19.33,17.24 L17.76,15.67 L19.31,14.21 L18.83,13.04 L16.70,13.11 L16.70,10.89 L18.83,10.96 L19.31,9.79 L17.76,8.33 L19.33,6.76 L20.79,8.31 Z" stroke-linejoin="round"/>
<circle cx="23" cy="12" r="1.9"/>
<rect x="43.5" y="7.5" width="11" height="9"/>
<circle cx="70.4" cy="7.4" r="2.1"/><circle cx="79.7" cy="17.4" r="2.1"/>
<path d="M70.6,9.5 V15.9 q0,1.5 1.5,1.5 H75.4 M73.4,15.3 L75.5,17.4 L73.4,19.5"/>
<path d="M79.7,15.3 V8.9 q0,-1.5 -1.5,-1.5 H74.3 M76.3,5.3 L74.2,7.4 L76.3,9.5"/>
<rect x="95.5" y="5.5" width="12" height="12"/><line x1="101.5" y1="5.5" x2="101.5" y2="17.5"/>
</g>
<circle cx="121.6" cy="11.9" r="1" fill="#c5c5c5"/>
</svg>
</div>
<div id="crumbs">
<div class="bc" style="left:18.4px;font-size:13.4px">soc_verification_lib</div>
<div class="bc" style="left:147.9px;font-size:12.75px">sv_cb_ex_lib</div>
<div class="bc" style="left:237.5px;font-size:13.25px">interface_uvc_lib</div>
<div class="bc" style="left:354.3px;font-size:12.4px">ahb</div>
<div class="bc" style="left:391.3px;font-size:12.5px">sv</div>
<div class="bc" style="left:442.2px;font-size:13.25px">ahb_master_monitor.sv</div>
<div class="bc" style="left:596px;font-size:13px">…</div>
<svg style="position:absolute;left:0;top:0" width="914" height="22">
<g fill="none" stroke="#a9a9a9" stroke-width="1">
<path d="M136.9,6.3 l4.8,4.8 l-4.8,4.8"/>
<path d="M227,6.3 l4.8,4.8 l-4.8,4.8"/>
<path d="M343.6,6.3 l4.8,4.8 l-4.8,4.8"/>
<path d="M381.3,6.3 l4.8,4.8 l-4.8,4.8"/>
<path d="M409.7,6.3 l4.8,4.8 l-4.8,4.8"/>
<path d="M585.9,6.3 l4.8,4.8 l-4.8,4.8"/>
</g>
<g fill="#a9a9a9"><rect x="427.3" y="7" width="8.4" height="1.1"/><rect x="427.3" y="9.5" width="4.8" height="1.1"/><rect x="427.3" y="12" width="8.4" height="1.1"/><rect x="427.3" y="14.7" width="6.4" height="1.1"/></g>
</svg>
</div>
<div id="leftb"></div>
</body></html>
